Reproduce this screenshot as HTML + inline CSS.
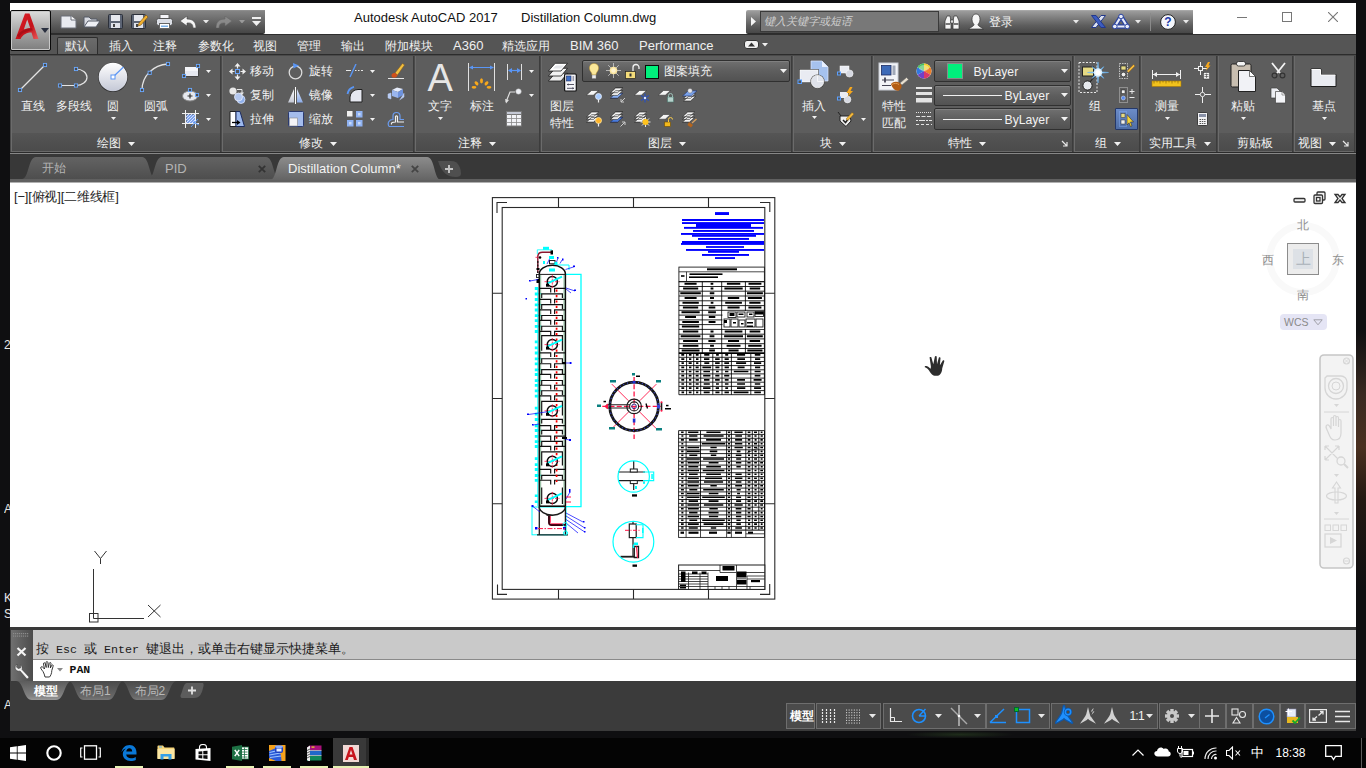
<!DOCTYPE html>
<html lang="zh">
<head>
<meta charset="utf-8">
<title>Autodesk AutoCAD 2017 - Distillation Column.dwg</title>
<style>
*{box-sizing:border-box;margin:0;padding:0}
html,body{width:1366px;height:768px;overflow:hidden;background:#0f0f11}
body{font-family:"Liberation Sans",sans-serif;font-size:12px;color:#f2f2f2;position:relative}
.b{position:absolute;display:block}
.t{position:absolute;white-space:nowrap;line-height:1}
#desk{left:0;top:0;width:1366px;height:768px;background:#0f0f11}
#deskr{left:1356px;top:330px;width:10px;height:260px;background:linear-gradient(#0f0f11,#3a2a22 25%,#4a3020 45%,#241812 65%,#0f0f11)}
#win{left:10px;top:3px;width:1346px;height:728px;background:#3b3b3b}
#title{left:10px;top:3px;width:1346px;height:31px;background:#fff}
.bar{background:linear-gradient(#848484,#6e6e6e 35%,#5a5a5a 65%,#464646);border-top:1px solid #8e8e8e;border-bottom:1px solid #2c2c2c}
.bar2{background:linear-gradient(#9c9c9c,#7a7a7a 35%,#5e5e5e 65%,#474747);border-top:1px solid #a8a8a8;border-bottom:1px solid #2c2c2c}
#menurow{left:10px;top:34px;width:1346px;height:21px;background:#555;border-top:1px solid #2e2e2e}
#ribbon{left:10px;top:54px;width:1346px;height:100px;background:#4a4a4a;border-top:1px solid #2c2c2c;border-bottom:1px solid #878787;box-shadow:inset 0 -1px 0 #2b2b2b}
.pan{position:absolute;top:56px;height:96px;background:#5d5d5d;border-left:1px solid #6b6b6b;border-right:1px solid #3c3c3c}
.pan i{position:absolute;left:0;right:0;bottom:0;height:19px;background:linear-gradient(#555,#4b4b4b);border-bottom:1px solid #686868}
.combo{position:absolute;background:linear-gradient(#707070,#5e5e5e 50%,#525252);border:1px solid #303030;border-radius:2px;box-shadow:inset 0 1px 0 #808080}
#ftabs{left:10px;top:154px;width:1346px;height:28px;background:#383838}
#ftline{left:10px;top:179px;width:1346px;height:4px;background:#606060;border-bottom:1px solid #b0b0b0}
#draw{left:10px;top:183px;width:1346px;height:445px;background:#fff}
#cmd{left:10px;top:627px;width:1346px;height:55px;background:#3a3a3a}
#cmdl{left:11px;top:630px;width:22px;height:51px;background:linear-gradient(90deg,#707070,#4c4c4c)}
#cmdhist{left:33px;top:630px;width:1323px;height:29px;background:#c9c9c9}
#cmdin{left:33px;top:659px;width:1323px;height:22px;background:#fff;border-top:1px solid #8a8a8a}
#task{left:0;top:738px;width:1366px;height:30px;background:#040404}
.sg{position:absolute;top:703px;height:26px;border:1px solid #6e6e6e;background:#4b4b4b}
</style>
</head>
<body>
<div id="desk" class="b"></div><div id="deskr" class="b"></div>
<div id="win" class="b"></div>
<div id="title" class="b"></div>
<div class="b bar" style="left:50px;top:10px;width:215px;height:24px;border-radius:0 0 2px 0"></div>
<svg class="b" style="left:60px;top:15px;" width="17" height="14" viewBox="0 0 17 14"><path d="M1 1H11L16 5V13H1Z" fill="#e8eaf0" stroke="#6a6e78"/><path d="M11 1V5H16" fill="#fff" stroke="#6a6e78"/></svg>
<svg class="b" style="left:83px;top:15px;" width="18" height="14" viewBox="0 0 18 14"><path d="M1 12V2H6L8 4H14V6" fill="#d8dbe2" stroke="#555a66"/><path d="M1 12L5 6H17L13 12Z" fill="#eef0f5" stroke="#555a66"/></svg>
<svg class="b" style="left:108px;top:14px;" width="15" height="15" viewBox="0 0 15 15"><rect x=".5" y=".5" width="14" height="14" rx="1" fill="#5c6474" stroke="#2c303a"/><rect x="3" y="1" width="9" height="6" fill="#e6e8ee"/><rect x="3" y="9" width="9" height="5" fill="#dfe2ea"/><rect x="5" y="10" width="2" height="3" fill="#444"/></svg>
<svg class="b" style="left:131px;top:14px;" width="18" height="15" viewBox="0 0 18 15"><rect x=".5" y=".5" width="14" height="14" rx="1" fill="#5c6474" stroke="#2c303a"/><rect x="3" y="1" width="9" height="6" fill="#e6e8ee"/><rect x="3" y="9" width="9" height="5" fill="#dfe2ea"/><rect x="5" y="10" width="2" height="3" fill="#444"/><path d="M8 9L15 1L17 3L10 11L7 12Z" fill="#f0b030" stroke="#7a5210" stroke-width=".6"/></svg>
<svg class="b" style="left:156px;top:14px;" width="17" height="15" viewBox="0 0 17 15"><rect x="4" y=".5" width="9" height="5" fill="#f4f4f8" stroke="#666"/><rect x=".5" y="4.5" width="16" height="7" rx="2" fill="#dcdfe6" stroke="#555"/><rect x="3.5" y="9.5" width="10" height="5" fill="#fff" stroke="#666"/><rect x="5" y="11.5" width="7" height="1.5" fill="#7ab0e8"/></svg>
<svg class="b" style="left:180px;top:16px;" width="16" height="12" viewBox="0 0 16 12"><path d="M7 0L0 5L7 10V7C11 6.5 13 8 13 12H16C16 6 13 3 7 3Z" fill="#f4f4f4" stroke="#444" stroke-width=".6"/></svg>
<svg class="b" style="left:202.5px;top:19.75px;" width="6" height="3.5" viewBox="0 0 6 3.5"><path d="M0 0H6L3.0 3.5Z" fill="#e8e8e8"/></svg>
<svg class="b" style="left:216px;top:16px;" width="16" height="12" viewBox="0 0 16 12"><path d="M9 0L16 5L9 10V7C5 6.5 3 8 3 12H0C0 6 3 3 9 3Z" fill="#8a8a8a" stroke="#666" stroke-width=".6"/></svg>
<svg class="b" style="left:238.5px;top:19.75px;" width="6" height="3.5" viewBox="0 0 6 3.5"><path d="M0 0H6L3.0 3.5Z" fill="#9a9a9a"/></svg>
<svg class="b" style="left:252px;top:17px;" width="9" height="9" viewBox="0 0 9 9"><rect x="0" y="0" width="9" height="2" fill="#f0f0f0"/><path d="M0 4H9L4.5 9Z" fill="#f0f0f0"/></svg>
<div class="t" style="left:354px;top:11px;font-size:13px;color:#111;">Autodesk AutoCAD 2017</div>
<div class="t" style="left:521px;top:11px;font-size:13px;color:#111;">Distillation Column.dwg</div>
<div class="b bar2" style="left:746px;top:10px;width:447px;height:24px;border-radius:2px 0 0 2px"></div>
<svg class="b" style="left:751px;top:17px;" width="5" height="9" viewBox="0 0 5 9"><path d="M0 0L5 4.5L0 9Z" fill="#f4f4f4"/></svg>
<div class="b " style="left:760px;top:11px;width:179px;height:21px;background:#787878;border:1px solid #3a3a3a"></div>
<div class="t" style="left:764px;top:16px;font-size:11px;color:#cfcfcf;width:88.0px;text-align:center;font-style:italic">键入关键字或短语</div>
<svg class="b" style="left:944px;top:14px;" width="16" height="16" viewBox="0 0 16 16"><path d="M1 15V7L3 2H6L7 7V15Z M9 15V7L10 2H13L15 7V15Z" fill="#f4f4f4" stroke="#333" stroke-width=".7"/><rect x="6.5" y="6" width="3" height="3" fill="#ddd" stroke="#333" stroke-width=".6"/><rect x="1.5" y="9" width="5" height="2" fill="#777"/><rect x="9.5" y="9" width="5" height="2" fill="#777"/></svg>
<svg class="b" style="left:968px;top:13px;" width="16" height="17" viewBox="0 0 16 17"><path d="M8 1C11 1 12 3.5 12 6.5C12 9 10.5 11 10 11.5C10 13 12 13.5 15.5 16H.5C4 13.5 6 13 6 11.5C5.5 11 4 9 4 6.5C4 3.5 5 1 8 1Z" fill="#f6f6f6" stroke="#333" stroke-width=".7"/></svg>
<div class="t" style="left:989px;top:15.5px;font-size:12px;color:#f4f4f4;width:24.0px;text-align:center;">登录</div>
<svg class="b" style="left:1073.0px;top:20.25px;" width="6" height="3.5" viewBox="0 0 6 3.5"><path d="M0 0H6L3.0 3.5Z" fill="#e8e8e8"/></svg>
<svg class="b" style="left:1091px;top:14.5px;" width="15" height="13" viewBox="0 0 15 13"><path d="M10 .5H14.500L5 12.500H.500Z" fill="#dde2f0" stroke="#22388c" stroke-width="1"/><path d="M.5 .5H5L14.500 12.500H10Z" fill="#3c5cc0" stroke="#22388c" stroke-width="1"/></svg>
<svg class="b" style="left:1112px;top:13px;" width="18" height="17" viewBox="0 0 18 17"><path d="M9 3.500L2.800 13.500H15.200Z" fill="none" stroke="#2c44a0" stroke-width="4.600" stroke-linejoin="round"/><path d="M9 3.500L2.800 13.500H15.200Z" fill="none" stroke="#e8ecf8" stroke-width="2.200" stroke-linejoin="round"/><circle cx="9" cy="3.500" r="2.300" fill="#e8ecf8" stroke="#2c44a0" stroke-width="1"/><circle cx="2.800" cy="13.500" r="2.300" fill="#e8ecf8" stroke="#2c44a0" stroke-width="1"/><circle cx="15.200" cy="13.500" r="2.300" fill="#e8ecf8" stroke="#2c44a0" stroke-width="1"/></svg>
<svg class="b" style="left:1134.5px;top:20.25px;" width="6" height="3.5" viewBox="0 0 6 3.5"><path d="M0 0H6L3.0 3.5Z" fill="#e8e8e8"/></svg>
<div class="b " style="left:1150px;top:13px;width:1px;height:18px;background:#8a8a8a"></div>
<svg class="b" style="left:1160px;top:14px;" width="16" height="16" viewBox="0 0 16 16"><circle cx="8" cy="8" r="7.4" fill="#f4f6fb" stroke="#222" stroke-width="1"/><text x="8" y="12.3" text-anchor="middle" font-family="Liberation Sans" font-weight="bold" font-size="12" fill="#1c3aa8">?</text></svg>
<svg class="b" style="left:1182.5px;top:20.25px;" width="6" height="3.5" viewBox="0 0 6 3.5"><path d="M0 0H6L3.0 3.5Z" fill="#e8e8e8"/></svg>
<div class="b " style="left:1237px;top:17px;width:10px;height:1px;background:#777"></div>
<div class="b " style="left:1282px;top:12px;width:10px;height:10px;border:1px solid #777"></div>
<svg class="b" style="left:1328px;top:12px;" width="10" height="10" viewBox="0 0 10 10"><path d="M0 0L10 10M10 0L0 10" stroke="#777" stroke-width="1.1"/></svg>
<div id="menurow" class="b"></div>
<div class="b " style="left:56.5px;top:37px;width:41.5px;height:18px;background:linear-gradient(#6b6b6b,#5e5e5e);border:1px solid #2d2d2d;border-bottom:none;border-radius:2px 2px 0 0"></div>
<div class="t" style="left:65px;top:40px;font-size:12px;color:#f0f0f0;width:24.0px;text-align:center;">默认</div>
<div class="t" style="left:109px;top:40px;font-size:12px;color:#f0f0f0;width:24.0px;text-align:center;">插入</div>
<div class="t" style="left:153px;top:40px;font-size:12px;color:#f0f0f0;width:24.0px;text-align:center;">注释</div>
<div class="t" style="left:197.5px;top:40px;font-size:12px;color:#f0f0f0;width:36.0px;text-align:center;">参数化</div>
<div class="t" style="left:253px;top:40px;font-size:12px;color:#f0f0f0;width:24.0px;text-align:center;">视图</div>
<div class="t" style="left:297px;top:40px;font-size:12px;color:#f0f0f0;width:24.0px;text-align:center;">管理</div>
<div class="t" style="left:341px;top:40px;font-size:12px;color:#f0f0f0;width:24.0px;text-align:center;">输出</div>
<div class="t" style="left:385px;top:40px;font-size:12px;color:#f0f0f0;width:48.0px;text-align:center;">附加模块</div>
<div class="t" style="left:502px;top:40px;font-size:12px;color:#f0f0f0;width:48.0px;text-align:center;">精选应用</div>
<div class="t" style="left:453px;top:39px;font-size:13px;color:#f0f0f0;">A360</div>
<div class="t" style="left:570px;top:39px;font-size:13px;color:#f0f0f0;">BIM 360</div>
<div class="t" style="left:639px;top:39px;font-size:13px;color:#f0f0f0;">Performance</div>
<svg class="b" style="left:744px;top:40px;" width="15" height="9" viewBox="0 0 15 9"><rect x=".5" y=".5" width="14" height="8" rx="2.5" fill="#f0f0f0" stroke="#333"/><path d="M4 6.5H11L7.5 2.5Z" fill="#333"/></svg>
<svg class="b" style="left:762.0px;top:43.25px;" width="6" height="3.5" viewBox="0 0 6 3.5"><path d="M0 0H6L3.0 3.5Z" fill="#f0f0f0"/></svg>
<div class="b " style="left:10px;top:10px;width:41px;height:41px;background:linear-gradient(#dcdcdc,#a4a4a4 55%,#7e7e7e);border:1px solid #0a0a0a;border-radius:2px;box-shadow:inset 0 0 0 1px #c8c8c8"></div>
<svg class="b" style="left:15px;top:13px;" width="24" height="27" viewBox="0 0 24 27"><defs><linearGradient id="ag" x1="0" y1="0" x2="1" y2="1"><stop offset="0" stop-color="#e0222a"/><stop offset=".6" stop-color="#c4121a"/><stop offset="1" stop-color="#e85a5a"/></linearGradient></defs><path d="M10 .5H14.5L23.5 26H18.5L16.5 19.5C12 19.5 8 21 5.5 26H.5Z M12.2 6.5L8.8 16.5C11 15.5 13.5 15.2 15.3 15.2Z" fill="url(#ag)" fill-rule="evenodd"/><path d="M2 22.5C6 17 12 15 17 15.2L17.8 17.5C12 17.5 7 19.5 4 24.5Z" fill="#a00c14" opacity=".75"/></svg>
<svg class="b" style="left:41px;top:28px;" width="8" height="5" viewBox="0 0 8 5"><path d="M0 0H8L4 5Z" fill="#2a3040"/></svg>
<div id="ribbon" class="b"></div>
<div class="pan" style="left:11px;width:210px"><i></i></div>
<div class="pan" style="left:222px;width:192px"><i></i></div>
<div class="pan" style="left:415px;width:125px"><i></i></div>
<div class="pan" style="left:541px;width:251px"><i></i></div>
<div class="pan" style="left:793px;width:79px"><i></i></div>
<div class="pan" style="left:873px;width:200px"><i></i></div>
<div class="pan" style="left:1074px;width:66px"><i></i></div>
<div class="pan" style="left:1141px;width:76px"><i></i></div>
<div class="pan" style="left:1218px;width:75px"><i></i></div>
<div class="pan" style="left:1294px;width:61px"><i></i></div>
<svg class="b" style="left:16px;top:60px;" width="34" height="34" viewBox="0 0 34 34"><path d="M4 30L29 5" stroke="#e4e4e4" stroke-width="1.3"/><rect x="2.4" y="28.4" width="3.2" height="3.2" fill="#4a4a4a" stroke="#6aa8ff" stroke-width=".9"/><rect x="27.4" y="3.4" width="3.2" height="3.2" fill="#4a4a4a" stroke="#6aa8ff" stroke-width=".9"/></svg>
<div class="t" style="left:21px;top:99.5px;font-size:12px;color:#f2f2f2;width:24.0px;text-align:center;">直线</div>
<svg class="b" style="left:54px;top:62px;" width="38" height="30" viewBox="0 0 38 30"><path d="M6 23.5H22A11 8.25 0 0 0 22 7" fill="none" stroke="#e4e4e4" stroke-width="1.2"/><rect x="4.4" y="21.9" width="3.2" height="3.2" fill="#4a4a4a" stroke="#6aa8ff" stroke-width=".9"/><rect x="20.4" y="21.9" width="3.2" height="3.2" fill="#4a4a4a" stroke="#6aa8ff" stroke-width=".9"/><rect x="20.4" y="5.4" width="3.2" height="3.2" fill="#4a4a4a" stroke="#6aa8ff" stroke-width=".9"/></svg>
<div class="t" style="left:55.5px;top:99.5px;font-size:12px;color:#f2f2f2;width:36.0px;text-align:center;">多段线</div>
<svg class="b" style="left:97px;top:61px;" width="32" height="32" viewBox="0 0 32 32"><defs><linearGradient id="cg" x1="0" y1="0" x2="0" y2="1"><stop offset="0" stop-color="#fff"/><stop offset="1" stop-color="#c4c8d6"/></linearGradient></defs><circle cx="16" cy="16.3" r="14.8" fill="#2c2c2c"/><circle cx="16" cy="16" r="14.3" fill="url(#cg)"/><path d="M16 16L26.5 6" stroke="#5a96f5" stroke-width="1.2"/><rect x="14" y="14" width="4" height="4" fill="#fff" stroke="#5a96f5"/></svg>
<div class="t" style="left:107px;top:99.5px;font-size:12px;color:#f2f2f2;width:12.0px;text-align:center;">圆</div>
<svg class="b" style="left:110.8px;top:116.8px;" width="5" height="3" viewBox="0 0 5 3"><path d="M0 0H5L2.5 3Z" fill="#f2f2f2"/></svg>
<svg class="b" style="left:137px;top:58px;" width="36" height="36" viewBox="0 0 36 36"><path d="M5 32C5 18 16 7 31 6" fill="none" stroke="#e4e4e4" stroke-width="1.3"/><rect x="3.4" y="30.4" width="3.2" height="3.2" fill="#4a4a4a" stroke="#6aa8ff" stroke-width=".9"/><rect x="11.1" y="13.200000000000001" width="3.2" height="3.2" fill="#4a4a4a" stroke="#6aa8ff" stroke-width=".9"/><rect x="29.4" y="4.4" width="3.2" height="3.2" fill="#4a4a4a" stroke="#6aa8ff" stroke-width=".9"/></svg>
<div class="t" style="left:143.5px;top:99.5px;font-size:12px;color:#f2f2f2;width:24.0px;text-align:center;">圆弧</div>
<svg class="b" style="left:152.8px;top:116.8px;" width="5" height="3" viewBox="0 0 5 3"><path d="M0 0H5L2.5 3Z" fill="#f2f2f2"/></svg>
<svg class="b" style="left:181px;top:63px;" width="20" height="16" viewBox="0 0 20 16"><rect x="4.5" y="4.5" width="13" height="9" fill="#2c2c2c"/><rect x="4" y="4" width="13" height="9" fill="#e6e8f0"/><rect x="4" y="4" width="13" height="4" fill="#f4f5f9"/><rect x="1.4" y="11.4" width="3.2" height="3.2" fill="#4a4a4a" stroke="#6aa8ff" stroke-width=".9"/><rect x="15.4" y="1.4" width="3.2" height="3.2" fill="#4a4a4a" stroke="#6aa8ff" stroke-width=".9"/></svg>
<svg class="b" style="left:205.8px;top:70.0px;" width="5" height="3" viewBox="0 0 5 3"><path d="M0 0H5L2.5 3Z" fill="#f2f2f2"/></svg>
<svg class="b" style="left:182px;top:87px;" width="18" height="16" viewBox="0 0 18 16"><ellipse cx="8" cy="9" rx="7.5" ry="5" fill="#e6e8ee" stroke="#888"/><path d="M8 6.5V11.5M5.5 9H10.5" stroke="#333" stroke-width="1.2"/><rect x="6.4" y="1.4" width="3.2" height="3.2" fill="#4a4a4a" stroke="#6aa8ff" stroke-width=".9"/><rect x="13.4" y="6.4" width="3.2" height="3.2" fill="#4a4a4a" stroke="#6aa8ff" stroke-width=".9"/></svg>
<svg class="b" style="left:205.8px;top:94.0px;" width="5" height="3" viewBox="0 0 5 3"><path d="M0 0H5L2.5 3Z" fill="#f2f2f2"/></svg>
<svg class="b" style="left:182px;top:110px;" width="18" height="18" viewBox="0 0 18 18"><path d="M3.5 0V18M13.5 0V18M0 3.5H17M0 13.5H17" stroke="#f0f0f0" stroke-width="1"/><rect x="4.5" y="4.5" width="8.5" height="8.5" fill="#7ea4ee"/><path d="M4 7L7 4M4 10L10 4M4 13L13 4M7 13L13 7M10 13L13 10" stroke="#dfe8ff" stroke-width=".9"/><path d="M9 17L16 9M11 12L17 15" stroke="#5a96f5" stroke-width="1"/></svg>
<svg class="b" style="left:205.8px;top:118.0px;" width="5" height="3" viewBox="0 0 5 3"><path d="M0 0H5L2.5 3Z" fill="#f2f2f2"/></svg>
<div class="t" style="left:96.5px;top:137px;font-size:12px;color:#f2f2f2;width:24.0px;text-align:center;">绘图</div>
<svg class="b" style="left:127.5px;top:141.5px;" width="7" height="4" viewBox="0 0 7 4"><path d="M0 0H7L3.5 4Z" fill="#f2f2f2"/></svg>
<svg class="b" style="left:229px;top:63px;" width="17" height="17" viewBox="0 0 17 17"><path d="M8.5 0L11.5 3.5H5.5ZM8.5 17L11.5 13.5H5.5ZM0 8.5L3.5 5.5V11.5ZM17 8.5L13.5 5.5V11.5Z" fill="#f0f0f0"/><path d="M8.5 3V5.5M8.5 11.5V14M3 8.5H5.5M11.5 8.5H14" stroke="#f0f0f0" stroke-width="1.2"/><rect x="6.5" y="6.5" width="4" height="4" fill="#555" stroke="#6aa6ff"/></svg>
<div class="t" style="left:250px;top:65px;font-size:12px;color:#f2f2f2;width:24.0px;text-align:center;">移动</div>
<svg class="b" style="left:229px;top:87px;" width="17" height="17" viewBox="0 0 17 17"><circle cx="4" cy="4" r="3.6" fill="#e8e8e8"/><circle cx="12" cy="12.5" r="4" fill="#8eb0ec" stroke="#dde6fa" stroke-width=".8"/><circle cx="9.5" cy="10" r="4" fill="#b4c8f0" stroke="#e8eefc" stroke-width=".8"/><path d="M8 2.5H13V6" fill="none" stroke="#e8e8e8" stroke-width="1"/><path d="M11 5.5H15L13 8Z" fill="#e8e8e8"/></svg>
<div class="t" style="left:250px;top:89px;font-size:12px;color:#f2f2f2;width:24.0px;text-align:center;">复制</div>
<svg class="b" style="left:229px;top:111px;" width="17" height="17" viewBox="0 0 17 17"><path d="M1 .5H7V15.5H1Z" fill="#fff" stroke="#222"/><path d="M7 .5H11L15.5 15.5H7Z" fill="#9db9ee" stroke="#1c2c60"/><path d="M3 11.5H9" stroke="#000" stroke-width="1.3"/><path d="M8 9L11.5 11.5L8 14Z" fill="#000"/></svg>
<div class="t" style="left:250px;top:113px;font-size:12px;color:#f2f2f2;width:24.0px;text-align:center;">拉伸</div>
<svg class="b" style="left:288px;top:63px;" width="16" height="17" viewBox="0 0 16 17"><circle cx="7.5" cy="9.5" r="6.3" fill="none" stroke="#dcdcdc" stroke-width="1.3"/><path d="M5 0L11 2.5L5.5 5.5Z" fill="#5a96f5"/></svg>
<div class="t" style="left:309px;top:65px;font-size:12px;color:#f2f2f2;width:24.0px;text-align:center;">旋转</div>
<svg class="b" style="left:288px;top:87px;" width="16" height="17" viewBox="0 0 16 17"><defs><linearGradient id="mg1" x1="0" y1="0" x2="0" y2="1"><stop offset="0" stop-color="#fff"/><stop offset="1" stop-color="#c4c8d4"/></linearGradient><linearGradient id="mg2" x1="0" y1="0" x2="0" y2="1"><stop offset="0" stop-color="#e4ecfc"/><stop offset="1" stop-color="#8cace8"/></linearGradient></defs><path d="M6 2V15.5H0Z" fill="url(#mg1)"/><path d="M9 2V15.5H15Z" fill="url(#mg2)"/><path d="M7.5 0V17" stroke="#fff" stroke-width="1"/></svg>
<div class="t" style="left:309px;top:89px;font-size:12px;color:#f2f2f2;width:24.0px;text-align:center;">镜像</div>
<svg class="b" style="left:288px;top:111px;" width="16" height="16" viewBox="0 0 16 16"><rect x=".5" y=".5" width="15" height="15" rx="1" fill="#a4bcec" stroke="#2a3a70"/><rect x="1.5" y="7" width="8" height="8" fill="#f4f4f8" stroke="#888" stroke-width=".6"/></svg>
<div class="t" style="left:309px;top:113px;font-size:12px;color:#f2f2f2;width:24.0px;text-align:center;">缩放</div>
<svg class="b" style="left:346px;top:64px;" width="18" height="15" viewBox="0 0 18 15"><path d="M0 6.5H5M9 6.5H10.5M12 6.5H13.5M15 6.5H17" stroke="#e8e8e8" stroke-width="1"/><path d="M4 13L10 0" stroke="#5a96f5" stroke-width="1.4"/></svg>
<svg class="b" style="left:369.5px;top:70.0px;" width="5" height="3" viewBox="0 0 5 3"><path d="M0 0H5L2.5 3Z" fill="#f2f2f2"/></svg>
<svg class="b" style="left:346px;top:86px;" width="17" height="17" viewBox="0 0 17 17"><path d="M4 16V11A8 8 0 0 1 12 3.5H16V16Z" fill="#e6e8f0" stroke="#222" stroke-width="1"/><path d="M1.5 8A9 9 0 0 1 8 .8" fill="none" stroke="#5a96f5" stroke-width="1.8"/></svg>
<svg class="b" style="left:369.5px;top:94.0px;" width="5" height="3" viewBox="0 0 5 3"><path d="M0 0H5L2.5 3Z" fill="#f2f2f2"/></svg>
<svg class="b" style="left:347px;top:111px;" width="16" height="16" viewBox="0 0 16 16"><rect x="0" y="0" width="5.5" height="5.5" fill="#f0f0f0"/><rect x="9" y="0" width="6.5" height="6.5" fill="#8fb2f2"/><rect x="11" y="2" width="2.5" height="2.5" fill="#c8daf8"/><rect x="0" y="9" width="6.5" height="6.5" fill="#8fb2f2"/><rect x="2" y="11" width="2.5" height="2.5" fill="#c8daf8"/><rect x="9" y="9" width="6.5" height="6.5" fill="#8fb2f2"/><rect x="11" y="11" width="2.5" height="2.5" fill="#c8daf8"/></svg>
<svg class="b" style="left:369.5px;top:118.0px;" width="5" height="3" viewBox="0 0 5 3"><path d="M0 0H5L2.5 3Z" fill="#f2f2f2"/></svg>
<svg class="b" style="left:387px;top:62px;" width="18" height="18" viewBox="0 0 18 18"><path d="M1 16.5H17" stroke="#e8e8e8" stroke-width="1"/><path d="M8 11L15.5 1.5L17.5 3L10.5 13Z" fill="#f2c040" stroke="#8a5a10" stroke-width=".5"/><path d="M5 15C3.5 13 5.5 10.5 8 11L10.5 13C10 15.5 7 16.5 5 15Z" fill="#d0501c"/></svg>
<svg class="b" style="left:387px;top:86px;" width="18" height="17" viewBox="0 0 18 17"><path d="M5 4L10 1.5L16 3L11 6Z" fill="#e6ecfa"/><path d="M5 4V10L11 12V6Z" fill="#9ab6ee"/><path d="M11 6L16 3V9L11 12Z" fill="#6e92dc"/><path d="M1 8L4 7V13L1 12ZM12.5 14L17 11V7" fill="#b8ccf4" stroke="#b8ccf4" stroke-width=".5"/></svg>
<svg class="b" style="left:387px;top:111px;" width="18" height="17" viewBox="0 0 18 17"><path d="M2 15.5C0 12 2 8.5 6 8.5V5A3.5 3.5 0 0 1 13 5V8.5H17M2 15.5H17" fill="none" stroke="#6a9cf0" stroke-width="1.2"/><path d="M4.5 13.5C4 11.5 5.5 11 8.5 11V5.5A1.2 1.2 0 0 1 10.5 5.5V11H17" fill="none" stroke="#f0f0f0" stroke-width="1.2"/></svg>
<div class="t" style="left:299px;top:137px;font-size:12px;color:#f2f2f2;width:24.0px;text-align:center;">修改</div>
<svg class="b" style="left:330.0px;top:141.5px;" width="7" height="4" viewBox="0 0 7 4"><path d="M0 0H7L3.5 4Z" fill="#f2f2f2"/></svg>
<div class="t" style="left:427.5px;top:58.5px;font-size:38px;color:#e6e6e6;">A</div>
<div class="t" style="left:428px;top:99.5px;font-size:12px;color:#f2f2f2;width:24.0px;text-align:center;">文字</div>
<svg class="b" style="left:437.8px;top:116.8px;" width="5" height="3" viewBox="0 0 5 3"><path d="M0 0H5L2.5 3Z" fill="#f2f2f2"/></svg>
<svg class="b" style="left:466px;top:62px;" width="31" height="30" viewBox="0 0 31 30"><path d="M2.5 1V29M28.5 1V29" stroke="#e0e0e0" stroke-width="1"/><path d="M4 5.5H27" stroke="#5a96f5" stroke-width="1"/><path d="M3 5.5L7 3.5V7.5ZM28 5.5L24 3.5V7.5Z" fill="#5a96f5"/><g fill="#f7a81c" transform="translate(0 1.800)"><ellipse cx="15.5" cy="17" rx="1.5" ry="2.6"/><ellipse cx="10.5" cy="19.5" rx="1.5" ry="2.4" transform="rotate(-40 10.5 19.5)"/><ellipse cx="20.5" cy="19.5" rx="1.5" ry="2.4" transform="rotate(40 20.5 19.5)"/><ellipse cx="8" cy="23.5" rx="2.4" ry="1.4"/><ellipse cx="23" cy="23.5" rx="2.4" ry="1.4"/></g></svg>
<div class="t" style="left:470px;top:99.5px;font-size:12px;color:#f2f2f2;width:24.0px;text-align:center;">标注</div>
<svg class="b" style="left:505.5px;top:64px;" width="18" height="16" viewBox="0 0 18 16"><path d="M1.5 0V16M15.5 0V16" stroke="#e0e0e0" stroke-width="1"/><path d="M3 6.5H14" stroke="#5a96f5" stroke-width="1.2"/><path d="M2 6.5L6 4V9ZM15 6.5L11 4V9Z" fill="#5a96f5"/></svg>
<svg class="b" style="left:528.5px;top:70.0px;" width="5" height="3" viewBox="0 0 5 3"><path d="M0 0H5L2.5 3Z" fill="#f2f2f2"/></svg>
<svg class="b" style="left:505px;top:87px;" width="18" height="17" viewBox="0 0 18 17"><path d="M1 15L5 5H10" fill="none" stroke="#e0e0e0" stroke-width="1.2"/><path d="M0 12L1 16.5L4 13Z" fill="#e0e0e0"/><circle cx="13.5" cy="4.5" r="2.8" fill="#eef0f5" stroke="#999" stroke-width=".5"/></svg>
<svg class="b" style="left:528.5px;top:94.0px;" width="5" height="3" viewBox="0 0 5 3"><path d="M0 0H5L2.5 3Z" fill="#f2f2f2"/></svg>
<svg class="b" style="left:506px;top:111px;" width="16" height="16" viewBox="0 0 16 16"><rect x=".5" y=".5" width="15" height="14.5" fill="#f2f3f7" stroke="#777"/><rect x=".5" y=".5" width="15" height="3" fill="#c4c8d4" stroke="#777"/><path d="M.5 7.5H15.5M.5 11.5H15.5M5.5 3.5V15M10.5 3.5V15" stroke="#888" stroke-width=".8"/></svg>
<div class="t" style="left:458px;top:137px;font-size:12px;color:#f2f2f2;width:24.0px;text-align:center;">注释</div>
<svg class="b" style="left:489.0px;top:141.5px;" width="7" height="4" viewBox="0 0 7 4"><path d="M0 0H7L3.5 4Z" fill="#f2f2f2"/></svg>
<svg class="b" style="left:547px;top:61px;" width="31" height="32" viewBox="0 0 31 32"><path d="M1.4 20L8.2 12.3H20.5L14 20Z" fill="#ececec" stroke="#1c1c1c" stroke-width=".8"/><path d="M1.4 15L8.2 7.3H20.5L14 15Z" fill="#f2f2f2" stroke="#1c1c1c" stroke-width=".8"/><path d="M1.4 10L8.2 2.3H20.5L14 10Z" fill="#fff" stroke="#1c1c1c" stroke-width=".8"/><path d="M6 7.5L9 4.5H17L14 7.5Z" fill="#e4e6ea"/><rect x="17.6" y="13" width="11.7" height="17" rx="1" fill="#f4f5f9" stroke="#111" stroke-width="1.2"/><rect x="19.5" y="15" width="4.5" height="5" fill="#3c6ec8" stroke="#1c2c60" stroke-width=".6"/><rect x="25.5" y="15" width="1.6" height="5" fill="#99a"/><path d="M20 23.5H27M20 27.3H27" stroke="#445" stroke-width=".9"/><path d="M20 23.5l1.5 -1.2v2.4zM27 27.3l-1.5 -1.2v2.4z" fill="#445"/></svg>
<div class="t" style="left:550px;top:99.5px;font-size:12px;color:#f2f2f2;width:24.0px;text-align:center;">图层</div>
<div class="t" style="left:550px;top:116.5px;font-size:12px;color:#f2f2f2;width:24.0px;text-align:center;">特性</div>
<div class="combo" style="left:582px;top:60px;width:208px;height:22px"></div>
<svg class="b" style="left:588px;top:63px;" width="12" height="17" viewBox="0 0 12 17"><path d="M6 .5C9.5 .5 11 3.5 10.5 6C10 8.5 8 9.5 8 12H4C4 9.5 2 8.5 1.5 6C1 3.5 2.5 .5 6 .5Z" fill="#fbe89a" stroke="#b8902c" stroke-width=".5"/><rect x="4" y="12" width="4" height="3.5" fill="#ececec" stroke="#777" stroke-width=".4"/></svg>
<svg class="b" style="left:605px;top:62px;" width="17" height="17" viewBox="0 0 17 17"><g stroke="#dcdcdc" stroke-width=".7"><path d="M8.5 1V16M1 8.5H16M3.2 3.2L13.8 13.8M13.8 3.2L3.2 13.8"/></g><circle cx="8.5" cy="8.5" r="3.8" fill="#fbe6a0"/><circle cx="8.5" cy="8.5" r="2.2" fill="#fff4d0"/></svg>
<svg class="b" style="left:625px;top:63px;" width="15" height="16" viewBox="0 0 15 16"><path d="M8 8V4.5A3 3 0 0 1 14 4.5V6" fill="none" stroke="#f2f2f2" stroke-width="1.3"/><rect x=".5" y="8.5" width="10" height="7" fill="#f4dc7a" stroke="#222" stroke-width=".7"/><rect x="4.5" y="10.5" width="2" height="3" fill="#333"/></svg>
<div class="b " style="left:645px;top:65px;width:14px;height:14px;background:#00f07c;border:1px solid #0a0a0a"></div>
<div class="t" style="left:664px;top:65px;font-size:12px;color:#f2f2f2;width:48.0px;text-align:center;">图案填充</div>
<svg class="b" style="left:780.0px;top:69.0px;" width="7" height="4" viewBox="0 0 7 4"><path d="M0 0H7L3.5 4Z" fill="#f2f2f2"/></svg>
<svg class="b" style="left:586px;top:87px;" width="17" height="17" viewBox="0 0 17 17"><path d="M.3 8.2L5.5 3.5H12.5L7.3 8.2Z" fill="#f4f4f4" stroke="#222" stroke-width=".5"/><circle cx="12.5" cy="9.5" r="3" fill="#a8ccff" stroke="#e8f0ff" stroke-width=".8"/><path d="M12.5 12.5V15.5" stroke="#eee" stroke-width="1.2"/></svg>
<svg class="b" style="left:586px;top:111px;" width="17" height="17" viewBox="0 0 17 17"><path d="M.5 11.1L5.7 6.4H12.7L7.5 11.1Z M.5 8.4L5.7 3.7H12.7L7.5 8.4Z M.5 5.7L5.7 1H12.7L7.5 5.7Z" fill="#f4f4f4" stroke="#222" stroke-width=".6"/><circle cx="12.5" cy="9.5" r="3" fill="#ffb428" stroke="#ffe6a0" stroke-width=".8"/><path d="M12.5 12.5V15.5" stroke="#eee" stroke-width="1.2"/></svg>
<svg class="b" style="left:610px;top:87px;" width="17" height="17" viewBox="0 0 17 17"><path d="M.5 11.1L5.7 6.4H12.7L7.5 11.1Z M.5 8.4L5.7 3.7H12.7L7.5 8.4Z M.5 5.7L5.7 1H12.7L7.5 5.7Z" fill="#f4f4f4" stroke="#222" stroke-width=".6"/><path d="M.5 11.1L5.7 6.4H12.7L7.5 11.1Z" fill="#8ab0f0" stroke="#1c2c60" stroke-width=".6"/><path d="M.5 8.4L5.7 3.7H12.7L7.5 8.4Z M.5 5.7L5.7 1H12.7L7.5 5.7Z" fill="#f4f4f4" stroke="#222" stroke-width=".6"/><path d="M15 11L11 15M11 12V15H14" fill="none" stroke="#ccc" stroke-width="1"/></svg>
<svg class="b" style="left:610px;top:111px;" width="17" height="17" viewBox="0 0 17 17"><path d="M.5 11.1L5.7 6.4H12.7L7.5 11.1Z M.5 8.4L5.7 3.7H12.7L7.5 8.4Z M.5 5.7L5.7 1H12.7L7.5 5.7Z" fill="#f4f4f4" stroke="#222" stroke-width=".6"/><path d="M.5 11.1L5.7 6.4H12.7L7.5 11.1Z" fill="#4a7cdc" stroke="#1c2c60" stroke-width=".6"/><path d="M.5 8.4L5.7 3.7H12.7L7.5 8.4Z M.5 5.7L5.7 1H12.7L7.5 5.7Z" fill="#f4f4f4" stroke="#222" stroke-width=".6"/><path d="M10.5 15.5L15 11M12 11H15V14" fill="none" stroke="#ccc" stroke-width="1"/></svg>
<svg class="b" style="left:634px;top:87px;" width="17" height="17" viewBox="0 0 17 17"><path d="M.3 8.2L5.5 3.5H12.5L7.3 8.2Z" fill="#f4f4f4" stroke="#222" stroke-width=".5"/><g stroke="#2c50b8" stroke-width="1.3"><path d="M11 6.5V15.5M7 8.5L15 13.5M15 8.5L7 13.5"/></g><circle cx="11" cy="11" r="1.2" fill="#dfe8ff"/></svg>
<svg class="b" style="left:634px;top:111px;" width="17" height="17" viewBox="0 0 17 17"><path d="M.5 11.1L5.7 6.4H12.7L7.5 11.1Z M.5 8.4L5.7 3.7H12.7L7.5 8.4Z M.5 5.7L5.7 1H12.7L7.5 5.7Z" fill="#f4f4f4" stroke="#222" stroke-width=".6"/><g stroke="#f4f4f4" stroke-width=".9"><path d="M11.5 6V16M6.5 11H16.5M8 7.5L15 14.5M15 7.5L8 14.5"/></g><circle cx="11.5" cy="11" r="3" fill="#ffc21c"/></svg>
<svg class="b" style="left:658px;top:87px;" width="17" height="17" viewBox="0 0 17 17"><path d="M.3 8.2L5.5 3.5H12.5L7.3 8.2Z" fill="#f4f4f4" stroke="#222" stroke-width=".5"/><rect x="9.5" y="10" width="6" height="5" fill="#b6d2cc" stroke="#4a7a70" stroke-width=".6"/><path d="M10.5 10V8.5A2 2 0 0 1 14.5 8.5V10" fill="none" stroke="#9cc0b8" stroke-width="1"/></svg>
<svg class="b" style="left:658px;top:111px;" width="17" height="17" viewBox="0 0 17 17"><path d="M.3 8.2L5.5 3.5H12.5L7.3 8.2Z" fill="#f4f4f4" stroke="#222" stroke-width=".5"/><rect x="6.5" y="11" width="6" height="4.5" fill="#f2b81c" stroke="#6a4a08" stroke-width=".6"/><path d="M10.5 11V8.5A2 2 0 0 1 14.5 8.5" fill="none" stroke="#f2c84a" stroke-width="1"/></svg>
<svg class="b" style="left:682px;top:87px;" width="17" height="17" viewBox="0 0 17 17"><path d="M1.5 14L6.7 9.3H13.7L8.5 14Z M1.5 11.3L6.7 6.6H13.7L8.5 11.3Z" fill="#f4f4f4" stroke="#222" stroke-width=".6"/><path d="M.5 9L6.2 3.8H15L9.3 9Z" fill="#7aa2ea" stroke="#1c2c60" stroke-width=".6"/><circle cx="8" cy="3.8" r="2.3" fill="#e8e8ee" stroke="#666" stroke-width=".4"/></svg>
<svg class="b" style="left:682px;top:111px;" width="17" height="17" viewBox="0 0 17 17"><path d="M.5 11.1L5.7 6.4H12.7L7.5 11.1Z M.5 8.4L5.7 3.7H12.7L7.5 8.4Z M.5 5.7L5.7 1H12.7L7.5 5.7Z" fill="#f4f4f4" stroke="#222" stroke-width=".6"/><path d="M7 11L11 14L9 16.5L5.5 14Z" fill="#b4641c"/><path d="M10 12L14.5 8" stroke="#d8a060" stroke-width="1.3"/></svg>
<div class="t" style="left:648px;top:137px;font-size:12px;color:#f2f2f2;width:24.0px;text-align:center;">图层</div>
<svg class="b" style="left:678.5px;top:141.5px;" width="7" height="4" viewBox="0 0 7 4"><path d="M0 0H7L3.5 4Z" fill="#f2f2f2"/></svg>
<svg class="b" style="left:797px;top:60px;" width="33" height="30" viewBox="0 0 33 30"><path d="M14 1H25L31 7V21H14Z" fill="#a6c2ee" stroke="#e0eaff" stroke-width=".7"/><path d="M25 1V7H31Z" fill="#e8f0ff"/><rect x="3" y="10" width="18" height="12" fill="#e9ebf2" stroke="#2a2a2a" stroke-width="1.6"/><rect x="3" y="10" width="18" height="12" fill="#e9ebf2" stroke="#fff" stroke-width=".7"/><circle cx="20.5" cy="21.5" r="6.3" fill="#dfe2ea" stroke="#2a2a2a" stroke-width="1.6"/><circle cx="20.5" cy="21.5" r="6.3" fill="#dfe2ea" stroke="#fff" stroke-width=".7"/><path d="M20.5 21.5V15.5M20.5 21.5H26.5" stroke="#fff" stroke-width=".7"/><rect x="1" y="20" width="3.5" height="3.5" fill="#555" stroke="#5aa0ff"/></svg>
<div class="t" style="left:802px;top:99.5px;font-size:12px;color:#f2f2f2;width:24.0px;text-align:center;">插入</div>
<svg class="b" style="left:812.2px;top:116.0px;" width="5" height="3" viewBox="0 0 5 3"><path d="M0 0H5L2.5 3Z" fill="#f2f2f2"/></svg>
<svg class="b" style="left:837px;top:64px;" width="18" height="15" viewBox="0 0 18 15"><rect x="3" y="2" width="9" height="7" fill="#e9ebf2" stroke="#fff" stroke-width=".5"/><circle cx="12.5" cy="9.5" r="3.6" fill="#d6d9e2" stroke="#fff" stroke-width=".5"/><rect x=".5" y="8" width="3" height="3" fill="#555" stroke="#5aa0ff"/></svg>
<svg class="b" style="left:837px;top:86px;" width="18" height="18" viewBox="0 0 18 18"><rect x="3" y="6" width="8" height="6" fill="#e9ebf2"/><circle cx="10.5" cy="13.5" r="3.4" fill="#d6d9e2" stroke="#fff" stroke-width=".5"/><rect x=".5" y="11" width="3" height="3" fill="#555" stroke="#5aa0ff"/><path d="M13 1L9.5 7H12L10.5 11L16 5H13.5L15.5 1Z" fill="#f7a81c"/></svg>
<svg class="b" style="left:837px;top:111px;" width="18" height="17" viewBox="0 0 18 17"><path d="M1 1L4 5" stroke="#222" stroke-width="1"/><path d="M3 5H13L14 10L9 15.5L3 10Z" fill="#f0f0f0" stroke="#222" stroke-width="1"/><path d="M6 9L8.5 11.5L12 7" fill="none" stroke="#222" stroke-width="1.5"/><path d="M9 8L15 1.5L17 3L11 9.5Z" fill="#f2b83c" stroke="#7a5210" stroke-width=".4"/></svg>
<svg class="b" style="left:860.8px;top:118.0px;" width="5" height="3" viewBox="0 0 5 3"><path d="M0 0H5L2.5 3Z" fill="#f2f2f2"/></svg>
<div class="t" style="left:820px;top:137px;font-size:12px;color:#f2f2f2;width:12.0px;text-align:center;">块</div>
<svg class="b" style="left:838.5px;top:141.5px;" width="7" height="4" viewBox="0 0 7 4"><path d="M0 0H7L3.5 4Z" fill="#f2f2f2"/></svg>
<svg class="b" style="left:878px;top:62px;" width="32" height="31" viewBox="0 0 32 31"><rect x="1" y="1" width="19" height="27" fill="#f2f4f8" stroke="#c8ccd4" stroke-width="1"/><rect x="3.5" y="3.5" width="9.5" height="9.5" fill="#3c6ab8" stroke="#1c2c60" stroke-width=".8"/><rect x="14.5" y="3.5" width="3" height="9.5" fill="#a0a8b8"/><path d="M4 18H16M4 23.5H13" stroke="#445" stroke-width="1"/><path d="M7 15.5V20.5" stroke="#445" stroke-width="1.8"/><path d="M13 22C15 19.5 19 19 22 21C24.5 23 24 26.5 21 28.5C18 29.5 14.5 27 13 22Z" fill="#b25c14"/><path d="M14 22.5C16 21 19 21 21 22.5" stroke="#e09a50" stroke-width="1" fill="none"/><path d="M22 21L28.5 15.5L30.5 17.5L24 23Z" fill="#e8e0d0" stroke="#666" stroke-width=".5"/></svg>
<div class="t" style="left:882px;top:99.5px;font-size:12px;color:#f2f2f2;width:24.0px;text-align:center;">特性</div>
<div class="t" style="left:882px;top:116.5px;font-size:12px;color:#f2f2f2;width:24.0px;text-align:center;">匹配</div>
<svg class="b" style="left:916px;top:63px;" width="16" height="16" viewBox="0 0 16 16"><circle cx="8" cy="8" r="7.6" fill="#eee"/><path d="M8 8L8 .6A7.4 7.4 0 0 1 14.4 4.3Z" fill="#f0d028"/><path d="M8 8L14.4 4.3A7.4 7.4 0 0 1 14.4 11.7Z" fill="#f08028"/><path d="M8 8L14.4 11.7A7.4 7.4 0 0 1 8 15.4Z" fill="#d83868"/><path d="M8 8L8 15.4A7.4 7.4 0 0 1 1.6 11.7Z" fill="#7040c8"/><path d="M8 8L1.6 11.7A7.4 7.4 0 0 1 1.6 4.3Z" fill="#3078e0"/><path d="M8 8L1.6 4.3A7.4 7.4 0 0 1 8 .6Z" fill="#48c060"/><ellipse cx="8" cy="5" rx="5" ry="3" fill="#fff" opacity=".35"/></svg>
<svg class="b" style="left:916px;top:86px;" width="16" height="18" viewBox="0 0 16 18"><rect x="0" y="1" width="16" height="2" fill="#e4e4e4"/><rect x="0" y="6" width="16" height="3" fill="#e4e4e4"/><rect x="0" y="12" width="16" height="4.5" fill="#e4e4e4"/></svg>
<svg class="b" style="left:916px;top:111px;" width="16" height="15" viewBox="0 0 16 15"><path d="M0 1.5H16" stroke="#e4e4e4" stroke-width="1.2" stroke-dasharray="1 1"/><path d="M0 5.5H16" stroke="#e4e4e4" stroke-width="1.2" stroke-dasharray="4 1.5"/><path d="M0 9.5H16" stroke="#e4e4e4" stroke-width="1.2" stroke-dasharray="2 1 6 1"/><path d="M0 13.5H16" stroke="#e4e4e4" stroke-width="1.2" stroke-dasharray="3 2"/></svg>
<div class="combo" style="left:934px;top:60px;width:137px;height:22px"></div>
<svg class="b" style="left:1061.2px;top:69.0px;" width="7" height="4" viewBox="0 0 7 4"><path d="M0 0H7L3.5 4Z" fill="#f2f2f2"/></svg>
<div class="combo" style="left:934px;top:84.5px;width:137px;height:21px"></div>
<svg class="b" style="left:1061.2px;top:93.0px;" width="7" height="4" viewBox="0 0 7 4"><path d="M0 0H7L3.5 4Z" fill="#f2f2f2"/></svg>
<div class="combo" style="left:934px;top:108px;width:137px;height:22px"></div>
<svg class="b" style="left:1061.2px;top:117.0px;" width="7" height="4" viewBox="0 0 7 4"><path d="M0 0H7L3.5 4Z" fill="#f2f2f2"/></svg>
<div class="b " style="left:946.5px;top:63px;width:16px;height:16px;background:#00f07c;border:1px solid #8a8a8a"></div>
<div class="t" style="left:973.5px;top:65.5px;font-size:12.2px;color:#f2f2f2;">ByLayer</div>
<div class="b " style="left:943px;top:94.5px;width:59px;height:1px;background:#f0f0f0"></div>
<div class="t" style="left:1004.5px;top:89.5px;font-size:12.2px;color:#f2f2f2;">ByLayer</div>
<div class="b " style="left:943px;top:118.5px;width:59px;height:1px;background:#f0f0f0"></div>
<div class="t" style="left:1004.5px;top:113.5px;font-size:12.2px;color:#f2f2f2;">ByLayer</div>
<div class="t" style="left:948px;top:137px;font-size:12px;color:#f2f2f2;width:24.0px;text-align:center;">特性</div>
<svg class="b" style="left:978.5px;top:141.5px;" width="7" height="4" viewBox="0 0 7 4"><path d="M0 0H7L3.5 4Z" fill="#f2f2f2"/></svg>
<svg class="b" style="left:1061px;top:139.5px;" width="8" height="8" viewBox="0 0 8 8"><path d="M1 1L6 6M6 2V6H2" fill="none" stroke="#e8e8e8" stroke-width="1.2"/></svg>
<svg class="b" style="left:1077px;top:61px;" width="34" height="34" viewBox="0 0 34 34"><rect x="2" y="1.5" width="18" height="30" fill="none" stroke="#e8e8e8" stroke-width="1" stroke-dasharray="2 1.5"/><rect x="5.5" y="6" width="11" height="9" fill="#e6da84" stroke="#222" stroke-width="1"/><circle cx="10.5" cy="24.5" r="4.6" fill="#e6e9ee" stroke="#222" stroke-width="1"/><path d="M13 21L21 11" stroke="#222" stroke-width="1.2"/><path d="M21.0 1.0L21.8 9.6L26.8 5.7L22.9 10.7L31.5 11.5L22.9 12.3L26.8 17.3L21.8 13.4L21.0 22.0L20.2 13.4L15.2 17.3L19.1 12.3L10.5 11.5L19.1 10.7L15.2 5.7L20.2 9.6Z" fill="#9fd4ff" stroke="#6ab4f0" stroke-width=".6"/><circle cx="21" cy="11.5" r="4.2" fill="#dff2ff"/><circle cx="21" cy="11.5" r="2.6" fill="#fff"/></svg>
<div class="t" style="left:1089px;top:99.5px;font-size:12px;color:#f2f2f2;width:12.0px;text-align:center;">组</div>
<svg class="b" style="left:1118px;top:62px;" width="18" height="18" viewBox="0 0 18 18"><rect x="1.5" y="1.5" width="8" height="15" fill="none" stroke="#ddd" stroke-width=".8" stroke-dasharray="1.5 1"/><rect x="3" y="4" width="5" height="4" fill="#e6da84" stroke="#222" stroke-width=".6"/><circle cx="5.5" cy="12.5" r="2.3" fill="#eee" stroke="#222" stroke-width=".6"/><path d="M9 9L15.5 2.5L17 4L10.5 10.5Z" fill="#f2b83c" stroke="#7a5210" stroke-width=".4"/></svg>
<svg class="b" style="left:1118px;top:86px;" width="18" height="18" viewBox="0 0 18 18"><rect x="1.5" y="1.5" width="8" height="15" fill="none" stroke="#ddd" stroke-width=".8" stroke-dasharray="1 1"/><rect x="3.5" y="4" width="3.5" height="3.5" fill="#f4f4f4" stroke="#222" stroke-width=".5"/><circle cx="5.3" cy="12" r="2" fill="#5a8cf0" stroke="#e0e8ff" stroke-width=".5"/><path d="M11.5 5.5H16.5M14 3V8M11.5 11.5H16.5" stroke="#e8e8e8" stroke-width="1"/></svg>
<div class="b " style="left:1115px;top:108px;width:23px;height:22px;background:linear-gradient(#6c8cc8,#4f6ea6);border:1px solid #24386a;border-radius:1px"></div>
<svg class="b" style="left:1118px;top:110px;" width="18" height="18" viewBox="0 0 18 18"><rect x="1.5" y="1.5" width="7" height="15" fill="none" stroke="#8ab4ff" stroke-width=".8" stroke-dasharray="1 1"/><rect x="3" y="3.5" width="4" height="4" fill="#e6da84" stroke="#333" stroke-width=".5"/><rect x="3" y="10" width="4" height="4" fill="#f0f0f0" stroke="#333" stroke-width=".5"/><path d="M9 4.5L15.5 12L12.5 12L14 16L12.5 16.5L11 12.8L9 15Z" fill="#f4d23c" stroke="#333" stroke-width=".6"/></svg>
<div class="t" style="left:1095px;top:137px;font-size:12px;color:#f2f2f2;width:12.0px;text-align:center;">组</div>
<svg class="b" style="left:1113.5px;top:141.5px;" width="7" height="4" viewBox="0 0 7 4"><path d="M0 0H7L3.5 4Z" fill="#f2f2f2"/></svg>
<svg class="b" style="left:1151px;top:68px;" width="31" height="20" viewBox="0 0 31 20"><path d="M1.5 2V11M29.5 2V11" stroke="#f0f0f0" stroke-width="1"/><path d="M2 6.5H29" stroke="#f0f0f0" stroke-width="1"/><path d="M2 6.5L6 4V9ZM29 6.5L25 4V9Z" fill="#f0f0f0"/><rect x="1" y="13" width="29" height="5.5" fill="#f2c21c" stroke="#a87808" stroke-width=".6"/><path d="M3 13V15.5M6 13V14.5M9 13V15.5M12 13V14.5M15 13V15.5M18 13V14.5M21 13V15.5M24 13V14.5M27 13V15.5" stroke="#7a5a08" stroke-width=".6"/></svg>
<div class="t" style="left:1155px;top:99.5px;font-size:12px;color:#f2f2f2;width:24.0px;text-align:center;">测量</div>
<svg class="b" style="left:1165.2px;top:116.8px;" width="5" height="3" viewBox="0 0 5 3"><path d="M0 0H5L2.5 3Z" fill="#f2f2f2"/></svg>
<svg class="b" style="left:1194px;top:62px;" width="18" height="18" viewBox="0 0 18 18"><path d="M6.5 0V13M0 6.5H13" stroke="#f0f0f0" stroke-width="1"/><rect x="4.5" y="4.5" width="4" height="4" fill="#555" stroke="#f0f0f0"/><path d="M14 0L11 5H13L12 8.5L16.5 3.5H14.5L16 0Z" fill="#f7a81c"/><rect x="9.5" y="10.5" width="6" height="6.5" fill="#f2f2f2" stroke="#333" stroke-width=".5"/><path d="M10.5 12.5H14.5M10.5 14.5H14.5M12.5 11.5V16" stroke="#444" stroke-width=".6"/></svg>
<svg class="b" style="left:1195px;top:87px;" width="16" height="16" viewBox="0 0 16 16"><path d="M7.5 0V16M0 7.5H16" stroke="#f0f0f0" stroke-width="1"/><circle cx="7.5" cy="7.5" r="2.2" fill="#5d5d5d" stroke="#f0f0f0" stroke-width=".9"/></svg>
<svg class="b" style="left:1197px;top:112px;" width="11" height="14" viewBox="0 0 11 14"><rect x=".5" y=".5" width="10" height="13" rx="1" fill="#f2f2f4" stroke="#222" stroke-width=".8"/><rect x="2" y="2" width="7" height="3" fill="#8a92a8"/><path d="M2.5 7.5H8.5M2.5 9.5H8.5M2.5 11.5H8.5" stroke="#555" stroke-width="1" stroke-dasharray="1.5 .8"/></svg>
<div class="t" style="left:1149px;top:137px;font-size:12px;color:#f2f2f2;width:48.0px;text-align:center;">实用工具</div>
<svg class="b" style="left:1203.5px;top:141.5px;" width="7" height="4" viewBox="0 0 7 4"><path d="M0 0H7L3.5 4Z" fill="#f2f2f2"/></svg>
<svg class="b" style="left:1230px;top:61px;" width="27" height="32" viewBox="0 0 27 32"><rect x="1" y="3" width="20" height="23" rx="1.5" fill="#c8beb0" stroke="#222" stroke-width="1"/><rect x="6.5" y=".5" width="9" height="4.5" rx="2" fill="#f4f4f4" stroke="#222" stroke-width=".8"/><path d="M8.5 9.5H19.5L25.5 15.5V30.5H8.5Z" fill="#f1f2f6" stroke="#222" stroke-width="1"/><path d="M19.5 9.5V15.5H25.5Z" fill="#fff" stroke="#222" stroke-width=".6"/></svg>
<div class="t" style="left:1230.5px;top:99.5px;font-size:12px;color:#f2f2f2;width:24.0px;text-align:center;">粘贴</div>
<svg class="b" style="left:1240.5px;top:116.8px;" width="5" height="3" viewBox="0 0 5 3"><path d="M0 0H5L2.5 3Z" fill="#f2f2f2"/></svg>
<svg class="b" style="left:1270px;top:62px;" width="17" height="17" viewBox="0 0 17 17"><path d="M2 1L10 11M15 1L7 11" stroke="#f4f4f4" stroke-width="1.8"/><circle cx="4.5" cy="13.5" r="2.4" fill="none" stroke="#333" stroke-width="1.2"/><circle cx="12.5" cy="13.5" r="2.4" fill="none" stroke="#333" stroke-width="1.2"/></svg>
<svg class="b" style="left:1270px;top:87px;" width="17" height="17" viewBox="0 0 17 17"><path d="M1 1H7L10 4V11H1Z" fill="#eceef2" stroke="#444" stroke-width=".7"/><path d="M5.5 4.5H12L15.5 8V16H5.5Z" fill="#f4f5f8" stroke="#444" stroke-width=".7"/><path d="M12 4.5V8H15.5Z" fill="#fff" stroke="#444" stroke-width=".5"/></svg>
<div class="t" style="left:1237px;top:137px;font-size:12px;color:#f2f2f2;width:36.0px;text-align:center;">剪贴板</div>
<svg class="b" style="left:1310px;top:68px;" width="27" height="20" viewBox="0 0 27 20"><path d="M1 1H11V6.5H26V18.5H1Z" fill="#e9ebf1" stroke="#1c1c1c" stroke-width="1"/><path d="M1.5 1.5H10.5V7H25.5" fill="none" stroke="#fff" stroke-width="1"/></svg>
<div class="t" style="left:1311.5px;top:99.5px;font-size:12px;color:#f2f2f2;width:24.0px;text-align:center;">基点</div>
<svg class="b" style="left:1321.8px;top:116.8px;" width="5" height="3" viewBox="0 0 5 3"><path d="M0 0H5L2.5 3Z" fill="#f2f2f2"/></svg>
<div class="t" style="left:1298px;top:137px;font-size:12px;color:#f2f2f2;width:24.0px;text-align:center;">视图</div>
<svg class="b" style="left:1328.5px;top:141.5px;" width="7" height="4" viewBox="0 0 7 4"><path d="M0 0H7L3.5 4Z" fill="#f2f2f2"/></svg>
<svg class="b" style="left:1342px;top:139.5px;" width="8" height="8" viewBox="0 0 8 8"><path d="M1 1L6 6M6 2V6H2" fill="none" stroke="#e8e8e8" stroke-width="1.2"/></svg>
<div id="ftabs" class="b"></div><div id="ftline" class="b"></div>
<svg class="b" width="0" height="0"><defs><linearGradient id="tg1" x1="0" y1="0" x2="0" y2="1"><stop offset="0" stop-color="#636363"/><stop offset="1" stop-color="#4e4e4e"/></linearGradient><linearGradient id="tg2" x1="0" y1="0" x2="0" y2="1"><stop offset="0" stop-color="#8c8c8c"/><stop offset="1" stop-color="#646464"/></linearGradient></defs></svg>
<svg class="b" style="left:22px;top:157px;" width="134" height="22" viewBox="0 0 134 22"><path d="M0 22C7 22 6 0 14 0H120C128 0 127 22 134 22Z" fill="url(#tg1)" stroke="none"/></svg>
<svg class="b" style="left:148px;top:157px;" width="132" height="22" viewBox="0 0 132 22"><path d="M0 22C7 22 6 0 14 0H118C126 0 125 22 132 22Z" fill="url(#tg1)" stroke="none"/></svg>
<svg class="b" style="left:270px;top:157px;" width="171" height="23" viewBox="0 0 171 23"><path d="M0 23C7 23 6 0 14 0H157C165 0 164 23 171 23Z" fill="url(#tg2)" stroke="none"/></svg>
<svg class="b" style="left:437px;top:161px;" width="25" height="16" viewBox="0 0 25 16"><path d="M1 0H14C22 0 24 8 24 13C24 15 22 16 19 16C10 16 5 12 1 0Z" fill="#4f4f4f"/><path d="M8 8H16M12 4V12" stroke="#c4c4c4" stroke-width="1.9"/></svg>
<div class="t" style="left:42px;top:162px;font-size:12px;color:#b4b4b4;width:24.0px;text-align:center;">开始</div>
<div class="t" style="left:165px;top:162px;font-size:13px;color:#b4b4b4;">PID</div>
<svg class="b" style="left:257px;top:163.5px;" width="10" height="10" viewBox="0 0 10 10"><path d="M1.7999999999999998 1.7999999999999998L8.2 8.2M8.2 1.7999999999999998L1.7999999999999998 8.2" stroke="#333" stroke-width="1.8"/></svg>
<div class="t" style="left:288px;top:161.5px;font-size:13px;color:#f4f4f4;">Distillation Column*</div>
<svg class="b" style="left:409.5px;top:163.5px;" width="10" height="10" viewBox="0 0 10 10"><path d="M1.7999999999999998 1.7999999999999998L8.2 8.2M8.2 1.7999999999999998L1.7999999999999998 8.2" stroke="#444" stroke-width="1.8"/></svg>
<div id="draw" class="b"></div>
<div class="t" style="left:14px;top:190px;font-size:13px;color:#1e1e1e;letter-spacing:-.2px">[−][俯视][二维线框]</div>
<svg class="b" style="left:86px;top:548px;" width="80" height="78" viewBox="0 0 80 78"><g fill="none" stroke="#333" stroke-width="1"><path d="M7.5 21V70.5H58"/><rect x="3.5" y="65.5" width="8.5" height="8.5"/><path d="M8.5 3L14.5 10.5L20.5 3M14.5 10.5V16"/><path d="M62 57L74.5 69M74.5 57L62 69"/></g></svg>
<svg class="b" style="left:1293px;top:191px;" width="54" height="14" viewBox="0 0 54 14"><g fill="#f4f4f4" stroke="#333" stroke-width="1.3"><rect x="1" y="7.5" width="11" height="3.5" rx="1"/><rect x="24" y="1" width="8" height="8" rx="1"/><rect x="21" y="4" width="8.5" height="8.5" rx="1"/><rect x="23.5" y="6.5" width="3.5" height="3.5" fill="#fff"/></g><path d="M42 3.5H45L47 6L49 3.5H52L49 7.5L52 11.5H49L47 9L45 11.5H42L45 7.5Z" fill="#f4f4f4" stroke="#333" stroke-width="1.3"/></svg>
<svg class="b" style="left:1263px;top:219px;" width="82" height="82" viewBox="0 0 82 82"><circle cx="40" cy="40" r="33.5" fill="none" stroke="#f9f9f9" stroke-width="7"/></svg>
<div class="b " style="left:1287px;top:243px;width:32px;height:32px;background:#ececec;border:1px solid #8c8c8c"></div>
<div class="b " style="left:1292.5px;top:248.5px;width:20px;height:20px;background:#dde1e6"></div>
<div class="t" style="left:1295.5px;top:251px;font-size:15px;color:#a9b1b8;width:15.0px;text-align:center;">上</div>
<div class="t" style="left:1297px;top:219px;font-size:12px;color:#8e8e8e;width:12.0px;text-align:center;">北</div>
<div class="t" style="left:1262px;top:254px;font-size:12px;color:#8e8e8e;width:12.0px;text-align:center;">西</div>
<div class="t" style="left:1332px;top:254px;font-size:12px;color:#8e8e8e;width:12.0px;text-align:center;">东</div>
<div class="t" style="left:1297px;top:289px;font-size:12px;color:#8e8e8e;width:12.0px;text-align:center;">南</div>
<div class="b " style="left:1279.5px;top:314px;width:47px;height:16px;background:#e5e5f5;border-radius:4px"></div>
<div class="t" style="left:1284px;top:317px;font-size:10.5px;color:#8a8a8a;">WCS</div>
<svg class="b" style="left:1313px;top:319px;" width="10" height="7" viewBox="0 0 10 7"><path d="M.8 .8H9.2L5 5.800Z" fill="none" stroke="#a0a0a8" stroke-width="1"/></svg>
<svg class="b" style="left:1318.5px;top:354px;" width="35" height="215" viewBox="0 0 35 215"><rect x="1" y="1" width="33" height="213" rx="4" fill="#f3f3f3" stroke="#c6c6c6" stroke-width="1.6"/><circle cx="27.5" cy="7" r="3" fill="none" stroke="#d6d6d6" stroke-width="1.2"/><path d="M25.5 5L29.5 9M29.5 5L25.5 9" stroke="#d6d6d6" stroke-width=".8"/><circle cx="27.5" cy="207" r="3" fill="none" stroke="#d6d6d6" stroke-width="1.2"/><path d="M25.5 207H29.5" stroke="#d6d6d6"/><path d="M8 22H22A6 6 0 0 1 28 28V34A11 11 0 0 1 6 34V24Z" fill="none" stroke="#d6d6d6" stroke-width="1.3"/><circle cx="17" cy="32" r="7.5" fill="none" stroke="#d6d6d6" stroke-width="1.3"/><circle cx="17" cy="32" r="4" fill="none" stroke="#d6d6d6" stroke-width="1"/><path d="M15 50H20L17.5 53Z" fill="#d6d6d6"/><path d="M5 58H30" stroke="#d6d6d6"/><path d="M9 78C7 74 6 72 8 71C10 70 11 73 12 75V65C12 63 14.5 63 14.5 65V72V63C14.5 61 17 61 17 63V72V64C17 62 19.5 62 19.5 64V73V67C19.5 65 22 65 22 67V79C22 84 19 86 16 86C12 86 11 83 9 78Z" fill="none" stroke="#d6d6d6" stroke-width="1.2"/><path d="M6 92L20 106M20 92L6 106M6 92H10M6 92V96M20 92H16M20 92V96M6 106H10M6 106V102" fill="none" stroke="#d6d6d6" stroke-width="1.2"/><circle cx="22" cy="107" r="4" fill="#f3f3f3" stroke="#d6d6d6" stroke-width="1.3"/><path d="M25 110L29 114" stroke="#d6d6d6" stroke-width="2"/><path d="M15 120H20L17.5 123Z" fill="#d6d6d6"/><path d="M17.5 128L13.5 134H16V149H19V134H21.5Z" fill="none" stroke="#d6d6d6" stroke-width="1.1"/><ellipse cx="17.5" cy="142" rx="10" ry="4" fill="none" stroke="#d6d6d6" stroke-width="1.2"/><path d="M15 158H20L17.5 161Z" fill="#d6d6d6"/><path d="M5 165H30" stroke="#d6d6d6"/><rect x="6" y="171" width="5.5" height="5.5" fill="none" stroke="#d6d6d6"/><rect x="14" y="171" width="5.5" height="5.5" fill="none" stroke="#d6d6d6"/><rect x="22" y="171" width="5.5" height="5.5" fill="none" stroke="#d6d6d6"/><rect x="6" y="180" width="16" height="13" fill="none" stroke="#d6d6d6" stroke-width="1.2"/><path d="M11 183V190L18 186.5Z" fill="#d6d6d6"/></svg>
<svg class="b" style="left:924px;top:355px;" width="22" height="23" viewBox="0 0 22 23"><path d="M.8 11.300C2.500 10.300 4.300 11.300 6.700 13.800L6.900 11.500L5.600 2.600C5.500 1.900 7.200 1.700 7.400 2.500L9.300 9.300L10.900 1.500C11 .800 12.700 .800 12.700 1.500L13 9.300L14.800 2.700C15 2 16.600 2.200 16.500 3L15.900 10.200L18.800 5.500C19.200 4.900 20.600 5.400 20.300 6.200L18.200 13.500C18.200 15.500 17.600 17.600 16.200 19.300C15.300 20.400 14.300 20.800 12.500 20.800C10.500 20.900 9 20.700 8 19.600C6.400 18 5.500 15.800 4 14.200C3 13.100 1.800 12.600 .800 12.200Z" fill="#2d2d2d"/></svg>
<svg class="b" style="left:486px;top:190px" width="300" height="416" viewBox="486 190 300 416"><rect x="492.4" y="197.6" width="282.4" height="401.5" fill="none" stroke="#2a2a2a" stroke-width="1.1"/><rect x="502.2" y="207.5" width="262.6" height="381.9" fill="none" stroke="#2a2a2a" stroke-width="1.1"/><path d="M558.5 197.6V207.5M558.5 589.4V599.1M633.5 197.6V207.5M633.5 589.4V599.1M708.5 197.6V207.5M708.5 589.4V599.1M492.4 293.3H502.2M764.8 293.3H774.8M492.4 398.5H502.2M764.8 398.5H774.8M492.4 503.8H502.2M764.8 503.8H774.8M497 213V202.5H507M760 202.5H769.8V212M497.5 584.5V594.4H507M760 594.4H769.7V584" fill="none" stroke="#2a2a2a" stroke-width="1.1"/><g fill="#0000ff"><rect x="715" y="212.1" width="14" height="2.9" fill="#0000ff"/><rect x="682" y="219" width="82" height="2" fill="#0000ff"/><rect x="682" y="222.1" width="82" height="1.9" fill="#0000ff"/><rect x="696" y="224" width="55" height="3" fill="#0000ff"/><rect x="684" y="226.9" width="79" height="1.9" fill="#0000ff"/><rect x="693" y="230" width="61" height="1.9" fill="#0000ff"/><rect x="681" y="233" width="83" height="1.9" fill="#0000ff"/><rect x="692" y="234.9" width="64" height="1.9" fill="#0000ff"/><rect x="698" y="238" width="51" height="1.9" fill="#0000ff"/><rect x="682" y="241" width="82" height="2" fill="#0000ff"/><rect x="681" y="243" width="83" height="1.9" fill="#0000ff"/><rect x="706" y="246.1" width="38" height="1.8" fill="#0000ff"/><rect x="686" y="249" width="78" height="1.9" fill="#0000ff"/><rect x="708" y="250.9" width="31" height="1.9" fill="#0000ff"/><rect x="702" y="254" width="47" height="1.9" fill="#0000ff"/><rect x="715" y="257.1" width="20" height="1.9" fill="#0000ff"/></g><rect x="678.9" y="267.1" width="85.5" height="14.6" fill="none" stroke="#1c1c1c" stroke-width="0.9"/><path d="M678.9 271.8L764.4 271.8" stroke="#1c1c1c" stroke-width="0.8" /><path d="M686.5 271.8L686.5 281.7" stroke="#1c1c1c" stroke-width="0.8" /><rect x="707" y="268.3" width="30" height="2" fill="#000"/><rect x="681" y="275.2" width="3.5" height="1.6" fill="#000"/><rect x="689.5" y="273.4" width="33" height="1.6" fill="#000"/><rect x="689" y="276.4" width="29" height="1.6" fill="#000"/><path d="M678.9 281.7H764.4M678.9 286.5H764.4M678.9 291.2H764.4M678.9 296H764.4M678.9 300.8H764.4M678.9 305.6H764.4M678.9 310.3H764.4M678.9 315.1H764.4M678.9 319.9H764.4M678.9 324.6H764.4M678.9 329.4H764.4M678.9 334.2H764.4M678.9 338.9H764.4M678.9 343.7H764.4M678.9 348.5H764.4M678.9 353.2H764.4M678.9 281.7V353.2M702.3 281.7V353.2M721.7 281.7V353.2M745.4 281.7V353.2M764.4 281.7V353.2" fill="none" stroke="#000" stroke-width=".85"/><path d="M684.5 283.7h12.1M710.6 283.7h2.7M726.9 283.7h13.4M748.5 283.7h12.9M683.1 288.5h15.1M710.6 288.5h2.8M724.4 288.5h18.3M749.7 288.5h10.5M680.3 293.2h20.5M709.8 293.2h4.5M747 293.2h15.9M684.6 298h12M710 298h4M727.8 298h11.4M747.9 298h14M682.5 302.8h16.3M710.7 302.8h2.7M725.2 302.8h16.7M749.3 302.8h11.2M682.9 307.6h15.3M708.7 307.6h6.6M727.5 307.6h12.1M748.4 307.6h13M681.5 312.3h18.2M708.2 312.3h7.7M726.6 312.3h13.9M750 312.3h9.8M685.1 317.1h10.9M708.8 317.1h6.5M724.1 317.1h18.8M747.7 317.1h14.5M682.3 321.9h16.6M708.6 321.9h6.9M726.3 321.9h14.5M750.4 321.9h9.1M681.9 326.6h17.3M727.3 326.6h12.5M747.8 326.6h14.3M682.9 331.4h15.4M710.5 331.4h3M724.7 331.4h17.7M749.6 331.4h10.7M680.7 336.2h19.7M709.6 336.2h4.8M724.1 336.2h18.9M746.9 336.2h15.9M683.1 340.9h14.9M708.4 340.9h7.1M728 340.9h11.1M749.6 340.9h10.5M682.8 345.7h15.6M710.1 345.7h3.8M726.6 345.7h13.9M748.2 345.7h13.4M681.7 350.5h17.8M709.2 350.5h5.7M728.5 350.5h10.1M747.3 350.5h15.2" stroke="#000" stroke-width="2"/><path d="M678.9 353.2H764.4M678.9 357.3H764.4M678.9 361.5H764.4M678.9 365.6H764.4M678.9 369.8H764.4M678.9 373.9H764.4M678.9 378.1H764.4M678.9 382.2H764.4M678.9 386.4H764.4M678.9 390.6H764.4M678.9 394.7H764.4M678.9 353.2V394.7M686.6 353.2V394.7M693.7 353.2V394.7M700.7 353.2V394.7M712.8 353.2V394.7M722 353.2V394.7M731.4 353.2V394.7M750.8 353.2V394.7M764.4 353.2V394.7" fill="none" stroke="#000" stroke-width=".85"/><path d="M681.3 354.9h2.9M688.9 354.9h2.6M695.8 354.9h2.8M704.2 354.9h5.2M716.1 354.9h2.7M725.2 354.9h3M737 354.9h8.1M754.8 354.9h5.6M681.3 359.1h3M689 359.1h2.3M696 359.1h2.5M704 359.1h5.4M715.1 359.1h4.6M724.6 359.1h4.2M737.3 359.1h7.7M755 359.1h5.2M681.5 363.2h2.4M688.6 363.2h3.1M696.1 363.2h2.3M704.3 363.2h5M715.1 363.2h4.6M724.3 363.2h4.8M736.1 363.2h10M754 363.2h7.2M681.3 367.4h2.9M689 367.4h2.4M695.6 367.4h3.1M702.4 367.4h8.7M715.4 367.4h4M724.6 367.4h4.3M737.6 367.4h7M755 367.4h5.2M681.3 371.5h2.8M688.8 371.5h2.6M695.6 371.5h3.1M703.4 371.5h6.6M716 371.5h2.8M725 371.5h3.4M733.8 371.5h14.6M754.6 371.5h6M681.3 375.7h2.9M688.7 375.7h2.8M695.7 375.7h2.9M703.2 375.7h7.2M715.3 375.7h4.1M724.2 375.7h5.1M754.7 375.7h5.7M681.3 379.8h2.9M689 379.8h2.3M695.7 379.8h3.1M704 379.8h5.5M715.1 379.8h4.6M724.8 379.8h3.8M737.1 379.8h7.9M753.6 379.8h8M681.4 384h2.7M688.9 384h2.6M695.7 384h3M703.7 384h6.1M716 384h2.9M724.9 384h3.6M737.1 384h7.9M754.8 384h5.5M681.4 388.1h2.8M688.9 388.1h2.6M695.9 388.1h2.6M703.1 388.1h7.4M715.7 388.1h3.3M725.3 388.1h2.8M737 388.1h8.3M754.1 388.1h7M681.5 392.3h2.6M688.8 392.3h2.7M696.1 392.3h2.2M703.7 392.3h6M715.4 392.3h4.1M724.5 392.3h4.4M733.7 392.3h14.8M754.3 392.3h6.6" stroke="#000" stroke-width="1.7"/><path d="M678.9 353.2L764.4 353.2" stroke="#000" stroke-width="1.6" /><rect x="722.5" y="311" width="41.5" height="18" fill="#fff"/><rect x="728" y="312" width="8" height="5.5" fill="none" stroke="#1c1c1c" stroke-width="0.9"/><rect x="737" y="312" width="8" height="5" fill="none" stroke="#1c1c1c" stroke-width="0.9"/><rect x="747" y="312" width="7" height="5" fill="none" stroke="#1c1c1c" stroke-width="0.9"/><rect x="755" y="311.5" width="8.5" height="5" fill="none" stroke="#1c1c1c" stroke-width="0.9"/><rect x="724" y="319" width="6" height="8" fill="none" stroke="#1c1c1c" stroke-width="0.9"/><rect x="731" y="319" width="7" height="8" fill="none" stroke="#1c1c1c" stroke-width="0.9"/><rect x="739" y="320" width="6" height="7" fill="none" stroke="#1c1c1c" stroke-width="0.9"/><rect x="746" y="319" width="9" height="8" fill="none" stroke="#1c1c1c" stroke-width="0.9"/><rect x="756" y="319" width="7" height="8" fill="none" stroke="#1c1c1c" stroke-width="0.9"/><rect x="729.5" y="313" width="5" height="3" fill="#000"/><rect x="738.5" y="313.5" width="5" height="1.5" fill="#000"/><rect x="749" y="313.5" width="3.5" height="1.5" fill="#000"/><rect x="755" y="312" width="8.5" height="2.5" fill="#000"/><rect x="724" y="320" width="3" height="3" fill="#000"/><rect x="733" y="322" width="3" height="1.5" fill="#000"/><rect x="741" y="323" width="2.5" height="1.5" fill="#000"/><rect x="747" y="322" width="6" height="1.5" fill="#000"/><rect x="747" y="325.5" width="6" height="1.5" fill="#000"/><path d="M678.6 430.6H764.5M678.6 434.4H764.5M678.6 438.3H764.5M678.6 442.1H764.5M678.6 445.9H764.5M678.6 449.8H764.5M678.6 453.6H764.5M678.6 457.4H764.5M678.6 461.2H764.5M678.6 465.1H764.5M678.6 468.9H764.5M678.6 472.7H764.5M678.6 476.6H764.5M678.6 480.4H764.5M678.6 484.2H764.5M678.6 488.1H764.5M678.6 491.9H764.5M678.6 495.7H764.5M678.6 499.5H764.5M678.6 503.4H764.5M678.6 507.2H764.5M678.6 511H764.5M678.6 514.9H764.5M678.6 518.7H764.5M678.6 522.5H764.5M678.6 526.4H764.5M678.6 530.2H764.5M678.6 430.6V530.2M686.1 430.6V530.2M700.5 430.6V530.2M726.6 430.6V530.2M731.4 430.6V530.2M745.8 430.6V530.2M752.3 430.6V530.2M758.8 430.6V530.2M764.5 430.6V530.2" fill="none" stroke="#000" stroke-width=".85"/><path d="M681.1 432.2h2.5M688.1 432.2h10.3M706.4 432.2h14.2M727.9 432.2h2.3M734.4 432.2h8.3M747.7 432.2h2.7M754 432.2h3M760.7 432.2h1.8M681.4 436h2M689.1 436h8.3M703.6 436h20M728 436h2M735.3 436h6.7M747.5 436h3.1M754.4 436h2.2M760.6 436h2.2M680.9 439.9h3M688.9 439.9h8.8M706.1 439.9h14.9M728 439.9h2M735.1 439.9h7M747.7 439.9h2.7M754.6 439.9h2M760.4 439.9h2.4M681.4 443.7h1.9M701.8 443.7h23.5M728 443.7h2M734.9 443.7h7.4M748 443.7h2.1M754 443.7h3.1M760.6 443.7h2M680.9 447.5h2.9M687.5 447.5h11.7M710.4 447.5h6.3M727.9 447.5h2.1M734.5 447.5h8.3M747.6 447.5h3M754 447.5h3.1M760.3 447.5h2.7M681.2 451.4h2.3M686.9 451.4h12.9M709.7 451.4h7.6M728 451.4h2M736.7 451.4h3.8M747.9 451.4h2.2M754.4 451.4h2.3M760.6 451.4h2M681.3 455.2h2.1M689.3 455.2h8M710.8 455.2h5.5M727.9 455.2h2.2M735.8 455.2h5.6M748 455.2h2.1M754.3 455.2h2.5M760.3 455.2h2.7M681.1 459h2.4M686.7 459h13.2M703.1 459h20.9M727.9 459h2.2M736.2 459h4.9M748 459h2.1M754.1 459h2.9M760.7 459h1.9M680.9 462.8h2.8M687.6 462.8h11.5M708.7 462.8h9.8M727.9 462.8h2.1M735.9 462.8h5.4M747.4 462.8h3.2M754.2 462.8h2.7M760.2 462.8h2.8M681.2 466.7h2.3M688.3 466.7h10M706.2 466.7h14.7M727.9 466.7h2.2M736.4 466.7h4.4M747.8 466.7h2.5M754.6 466.7h2M760.7 466.7h2M681.1 470.5h2.5M687.6 470.5h11.4M702.7 470.5h21.7M728 470.5h2.1M747.6 470.5h2.9M754.5 470.5h2M760.3 470.5h2.7M681 474.3h2.7M689 474.3h8.7M706.2 474.3h14.7M727.8 474.3h2.3M735.5 474.3h6.2M747.6 474.3h2.8M754.4 474.3h2.2M760.7 474.3h1.9M681.4 478.2h2M687.9 478.2h10.9M705.1 478.2h17M727.9 478.2h2.2M734.9 478.2h7.5M747.7 478.2h2.6M754.1 478.2h2.8M760.4 478.2h2.5M681.4 482h2M687.4 482h11.8M704 482h19.1M727.9 482h2.2M735.8 482h5.6M747.6 482h2.9M754.2 482h2.8M760.7 482h1.9M681 485.8h2.7M687.8 485.8h10.9M710.4 485.8h6.4M727.9 485.8h2.2M735.2 485.8h6.8M747.7 485.8h2.6M754.3 485.8h2.6M760.3 485.8h2.7M680.9 489.7h3M689.3 489.7h8M703.2 489.7h20.6M727.9 489.7h2.1M736.6 489.7h4.1M747.9 489.7h2.2M754.5 489.7h2.1M760.3 489.7h2.8M681 493.5h2.8M687 493.5h12.6M708.8 493.5h9.6M727.9 493.5h2.2M737.1 493.5h2.9M747.8 493.5h2.5M754.5 493.5h2.1M760.6 493.5h2.1M681.4 497.3h1.9M687.1 497.3h12.4M702.2 497.3h22.6M727.8 497.3h2.4M736.1 497.3h5M747.4 497.3h3.2M754.3 497.3h2.4M760.6 497.3h2M681.4 501.1h2M688.6 501.1h9.4M708.6 501.1h9.9M727.9 501.1h2.2M736.1 501.1h5M747.5 501.1h3.1M754.2 501.1h2.8M760.3 501.1h2.8M681 505h2.7M687.4 505h11.8M703.9 505h19.4M728 505h2.1M734.5 505h8.2M747.8 505h2.6M754.4 505h2.3M760.2 505h2.8M681 508.8h2.6M687.9 508.8h10.9M709.4 508.8h8.4M728 508.8h2M735.7 508.8h5.7M747.5 508.8h3.1M760.7 508.8h1.9M681.4 512.6h2M689.1 512.6h8.4M708.5 512.6h10.1M727.8 512.6h2.3M736 512.6h5.3M747.7 512.6h2.6M754.4 512.6h2.4M760.6 512.6h2M681.3 516.5h2M687.7 516.5h11.3M708.9 516.5h9.3M728 516.5h2M735.9 516.5h5.4M747.5 516.5h3.1M754.6 516.5h2M760.4 516.5h2.5M681.1 520.3h2.4M689.3 520.3h7.9M702.2 520.3h22.6M727.8 520.3h2.3M736.4 520.3h4.3M748 520.3h2.2M754.1 520.3h2.8M760.4 520.3h2.5M681 524.1h2.7M687.9 524.1h10.9M703.6 524.1h19.9M727.8 524.1h2.4M736.3 524.1h4.6M747.9 524.1h2.3M754.1 524.1h2.9M760.8 524.1h1.8M681.1 528h2.5M688.7 528h9.1M710.8 528h5.4M727.9 528h2.1M735.3 528h6.6M747.8 528h2.6M754.4 528h2.3M760.4 528h2.5" stroke="#000" stroke-width="1.6"/><rect x="678.6" y="530.2" width="85.9" height="7.2" fill="#fff" stroke="#1c1c1c" stroke-width="0.9"/><path d="M686.1 530.2V537.4M700.5 530.2V537.4M726.6 530.2V537.4M731.4 530.2V537.4M745.8 530.2V537.4" stroke="#1c1c1c" stroke-width=".8"/><rect x="680.5" y="531.6" width="3.5" height="2.2" fill="#000"/><rect x="688.5" y="531.6" width="10" height="2.2" fill="#000"/><rect x="709" y="531.6" width="8" height="2.2" fill="#000"/><rect x="727.3" y="531.6" width="3.4" height="2.2" fill="#000"/><rect x="735" y="531.6" width="7" height="2.2" fill="#000"/><rect x="748" y="531.6" width="5" height="2.2" fill="#000"/><path d="M745.8 533.8L764.5 533.8" stroke="#1c1c1c" stroke-width="0.8" /><path d="M747 453L758 448" stroke="#1c1c1c" stroke-width="0.7" /><rect x="678.6" y="565" width="86.2" height="24.4" fill="#fff" stroke="#1c1c1c" stroke-width="1"/><path d="M678.6 570.5H720M720 565V572.5H736.5V565M736.5 572.5H764.8M708 572.5V589.4M736.5 572.5V589.4M747 576V589.4M747 576H764.8M747 579H764.8M688.5 572.5V589.4M700 572.5V589.4M678.6 574H708M678.6 576.5H708M678.6 579H708M678.6 581.5H708M678.6 584H708M678.6 586.5H708M708 586.5H764.8M715 586.5V589.4M722 586.5V589.4M729 586.5V589.4M750 586.5V589.4" fill="none" stroke="#1c1c1c" stroke-width=".8"/><rect x="722.5" y="566" width="12" height="4.5" fill="#000"/><rect x="681" y="571.5" width="4.5" height="10.5" fill="#000"/><rect x="692" y="571.5" width="5.5" height="2.5" fill="#000"/><rect x="701.5" y="571.5" width="5" height="2.5" fill="#000"/><rect x="716" y="576" width="12" height="5" fill="#000"/><rect x="737" y="571.5" width="9.5" height="5.5" fill="#000"/><rect x="737" y="580" width="9.5" height="4.5" fill="#000"/><rect x="751" y="580" width="9" height="2.2" fill="#000"/><rect x="680" y="584.5" width="6" height="1.5" fill="#000"/><rect x="680" y="587" width="6" height="1.5" fill="#000"/><rect x="737" y="577" width="9.5" height="2.5" fill="#808080"/><path d="M566 274.4H581V506.7H566" fill="none" stroke="#00ffff" stroke-width="1.3"/><path d="M553 265H569V270" fill="none" stroke="#00ffff" stroke-width="1"/><rect x="532" y="507" width="34" height="27.8" fill="none" stroke="#00ffff" stroke-width="1"/><path d="M537.8 288L537.8 506" stroke="#00ffff" stroke-width="0.9" /><path d="M534.8 287.1h3.4v2.8h-3.4zM534.8 292.6h3.4v2.8h-3.4zM534.8 298.1h3.4v2.8h-3.4zM534.8 303.4h3.4v2.8h-3.4zM534.8 308.6h3.4v2.8h-3.4zM534.8 314.3h3.4v2.8h-3.4zM534.8 319.2h3.4v2.8h-3.4zM534.8 325h3.4v2.8h-3.4zM534.8 330.1h3.4v2.8h-3.4zM534.8 351.6h3.4v2.8h-3.4zM534.8 357.5h3.4v2.8h-3.4zM534.8 362.5h3.4v2.8h-3.4zM534.8 368.4h3.4v2.8h-3.4zM534.8 373.1h3.4v2.8h-3.4zM534.8 379.3h3.4v2.8h-3.4zM534.8 384h3.4v2.8h-3.4zM534.8 389.5h3.4v2.8h-3.4zM534.8 394.7h3.4v2.8h-3.4zM534.8 418.1h3.4v2.8h-3.4zM534.8 424.4h3.4v2.8h-3.4zM534.8 429.1h3.4v2.8h-3.4zM534.8 434.9h3.4v2.8h-3.4zM534.8 440.2h3.4v2.8h-3.4zM534.8 445.1h3.4v2.8h-3.4zM534.8 468.1h3.4v2.8h-3.4zM534.8 474.1h3.4v2.8h-3.4zM534.8 479h3.4v2.8h-3.4zM534.8 340.6h3v2.6h-3zM534.8 346.6h3v2.6h-3zM534.8 406.8h3v2.6h-3zM534.8 412.8h3v2.6h-3zM534.8 457.3h3v2.6h-3zM534.8 463.3h3v2.6h-3zM534.8 494.4h3v2.6h-3zM534.8 500.4h3v2.6h-3z" fill="#00ffff"/><path d="M537.8 293.8h4M537.8 304.6h4M537.8 315.5h4M537.8 326.2h4M537.8 358.7h4M537.8 369.6h4M537.8 380.5h4M537.8 390.7h4M537.8 419.3h4M537.8 430.3h4M537.8 441.4h4M537.8 475.3h4" stroke="#00ffff" stroke-width=".8"/><path d="M539.3 506.7V274A13.05 8.7 0 0 1 565.4 274V506.7" fill="none" stroke="#0c0c0c" stroke-width="1.5"/><path d="M540.6999999999999 506V275M564.0 275V506" fill="none" stroke="#1a7a3a" stroke-width=".5"/><path d="M539.3 274.4L565.4 274.4" stroke="#1c1c1c" stroke-width="1" /><path d="M539.3 506.2L565.4 506.2" stroke="#000" stroke-width="1.5" /><path d="M539.3 506.7A13.05 8.5 0 0 0 565.4 506.7" fill="none" stroke="#1c1c1c" stroke-width="1.4"/><path d="M539.3 506.7V534.8M565.4 506.7V534.8M537 534.8H568" fill="none" stroke="#1c1c1c" stroke-width="1.3"/><path d="M539.3 288.3H550.7V292.6M565.4 288.3H554.6V292.6M541.7 298.1V293.8H562.4V298.1M539.3 299.3H550.7V303.6M565.4 299.3H554.6V303.6M541.7 308.9V304.6H562.4V308.9M539.3 309.8H550.7V314.1M565.4 309.8H554.6V314.1M541.7 319.8V315.5H562.4V319.8M539.3 320.4H550.7V324.7M565.4 320.4H554.6V324.7M541.7 330.5V326.2H562.4V330.5M539.3 331.3H550.7V335.6M565.4 331.3H554.6V335.6M539.3 352.8H550.7V357.1M565.4 352.8H554.6V357.1M541.7 363V358.7H562.4V363M539.3 363.7H550.7V368M565.4 363.7H554.6V368M541.7 373.9V369.6H562.4V373.9M539.3 374.3H550.7V378.6M565.4 374.3H554.6V378.6M541.7 384.8V380.5H562.4V384.8M539.3 385.2H550.7V389.5M565.4 385.2H554.6V389.5M541.7 395V390.7H562.4V395M539.3 395.9H550.7V400.2M565.4 395.9H554.6V400.2M541.7 423.6V419.3H562.4V423.6M539.3 425.6H550.7V429.9M565.4 425.6H554.6V429.9M541.7 434.6V430.3H562.4V434.6M539.3 436.1H550.7V440.4M565.4 436.1H554.6V440.4M541.7 445.7V441.4H562.4V445.7M539.3 446.3H550.7V450.6M565.4 446.3H554.6V450.6M539.3 469.3H550.7V473.6M565.4 469.3H554.6V473.6M541.7 479.6V475.3H562.4V479.6M539.3 480.2H550.7V484.5M565.4 480.2H554.6V484.5M541.7 350.8V335.6H562.4V350.8M541.7 415.4V401.4H562.4V415.4M541.7 465.6V451.9H562.4V465.6M541.7 487.5V503.9M562.4 487.5V503.9" fill="none" stroke="#101010" stroke-width="1.15"/><path d="M556.6 289.5V482" stroke="#ff0000" stroke-width="1.7" stroke-dasharray="2.2 3.25"/><circle cx="552.3" cy="281.7" r="5.1" fill="#fff" stroke="#0c0c0c" stroke-width="1.5"/><path d="M544.5 281.7H559.5M552.3 275.2V288.2" stroke="#ff1446" stroke-width=".8" stroke-dasharray="2.5 1"/><path d="M548 283.2L562 276.7" stroke="#00ffff" stroke-width="1.9"/><rect x="546" y="283.7" width="3" height="3" fill="#000"/><circle cx="552.3" cy="344.6" r="5.1" fill="#fff" stroke="#0c0c0c" stroke-width="1.5"/><path d="M544.5 344.6H559.5M552.3 338.1V351.1" stroke="#ff1446" stroke-width=".8" stroke-dasharray="2.5 1"/><path d="M548 346.1L562 339.6" stroke="#00ffff" stroke-width="1.9"/><rect x="546" y="346.6" width="3" height="3" fill="#000"/><circle cx="552.3" cy="410.8" r="5.1" fill="#fff" stroke="#0c0c0c" stroke-width="1.5"/><path d="M544.5 410.8H559.5M552.3 404.3V417.3" stroke="#ff1446" stroke-width=".8" stroke-dasharray="2.5 1"/><path d="M548 412.3L562 405.8" stroke="#00ffff" stroke-width="1.9"/><rect x="546" y="412.8" width="3" height="3" fill="#000"/><circle cx="552.3" cy="461.3" r="5.1" fill="#fff" stroke="#0c0c0c" stroke-width="1.5"/><path d="M544.5 461.3H559.5M552.3 454.8V467.8" stroke="#ff1446" stroke-width=".8" stroke-dasharray="2.5 1"/><path d="M548 462.8L562 456.3" stroke="#00ffff" stroke-width="1.9"/><rect x="546" y="463.3" width="3" height="3" fill="#000"/><circle cx="552.3" cy="498.4" r="5.1" fill="#fff" stroke="#0c0c0c" stroke-width="1.5"/><path d="M544.5 498.4H559.5M552.3 491.9V504.9" stroke="#ff1446" stroke-width=".8" stroke-dasharray="2.5 1"/><path d="M548 499.9L562 493.4" stroke="#00ffff" stroke-width="1.9"/><rect x="546" y="500.4" width="3" height="3" fill="#000"/><rect x="549.5" y="260.5" width="5.5" height="3.3" fill="#fff" stroke="#1c1c1c" stroke-width="1"/><rect x="549" y="256" width="5" height="3" fill="#00ffff"/><rect x="543" y="246.8" width="6" height="3" fill="#00ffff"/><rect x="549" y="268.5" width="6" height="3" fill="#00ffff"/><rect x="543" y="261" width="2" height="3" fill="#00ffff"/><rect x="554.5" y="262" width="3" height="3" fill="#00ffff"/><path d="M537.8 273V257C537.8 253.8 539.5 252.3 542.5 252.3H551.5" fill="none" stroke="#8a1830" stroke-width="1.4"/><path d="M537.8 261V273" fill="none" stroke="#141414" stroke-width="1.3" stroke-dasharray="2.2 1.2"/><path d="M535.5 257.3H538.5" stroke="#ff1446" stroke-width=".8"/><rect x="550.5" y="250.3" width="2.5" height="4.2" fill="#000"/><path d="M537.3 249.8H552M537.3 249.8V254" fill="none" stroke="#00ffff" stroke-width=".8"/><rect x="536.5" y="268" width="3" height="2" fill="#000"/><rect x="536.5" y="274.5" width="3" height="3" fill="none" stroke="#1c1c1c" stroke-width="0.9"/><rect x="536.5" y="279" width="3" height="4" fill="#000"/><circle cx="540" cy="257.5" r="1.3" fill="#000"/><path d="M565.5 269.5L575 266.5M566 288L575 291M566 289L571 293M530 281L538 279.5M528.5 414.5L547 411.8M533 425L539 424M562 363L569 363M562 438L569 440M566 513L583 522M566 516L584 527.5M566 519.5L584 531.5M566 523L578 533M540 512L533 506.5M566 499L570 492M547 264L549.5 259M556.5 262L558 258M560 263.5L562 260" fill="none" stroke="#0000ff" stroke-width=".7"/><rect x="573" y="265.5" width="2" height="1.5" fill="#0000ff"/><rect x="574" y="289.5" width="2" height="1.5" fill="#0000ff"/><rect x="529" y="280" width="1.5" height="1.5" fill="#0000ff"/><rect x="525.5" y="298" width="1.5" height="1.5" fill="#0000ff"/><rect x="527" y="413.5" width="2" height="1.5" fill="#0000ff"/><rect x="532" y="424" width="1.5" height="1.5" fill="#0000ff"/><rect x="569.5" y="362" width="2" height="2" fill="#0000ff"/><rect x="569" y="439" width="2" height="2" fill="#0000ff"/><rect x="583" y="521" width="1.5" height="1.5" fill="#0000ff"/><rect x="584" y="527" width="1.5" height="1.5" fill="#0000ff"/><rect x="584" y="531" width="1.5" height="1.5" fill="#0000ff"/><rect x="531.5" y="505" width="2" height="2" fill="#0000ff"/><rect x="569" y="489" width="1.5" height="3.5" fill="#0000ff"/><rect x="557" y="257" width="1.5" height="1.5" fill="#0000ff"/><rect x="562" y="258.5" width="1.5" height="2" fill="#0000ff"/><rect x="535" y="527" width="2.5" height="2.5" fill="#0000ff"/><rect x="563" y="527" width="2.5" height="2.5" fill="#0000ff"/><path d="M562 363H566M562 438H567" stroke="#000" stroke-width="1.8"/><path d="M566 497H571M566 502H571" stroke="#ff1446" stroke-width="1"/><path d="M549 515.5V522.5C549 524 550 525 551.5 525H566" fill="none" stroke="#3a0010" stroke-width="1.9"/><path d="M550.5 516V522.5C550.5 523.2 551 523.7 551.5 523.7H563" fill="none" stroke="#ff1446" stroke-width=".8"/><path d="M546.5 515.3H553" stroke="#1c1c1c" stroke-width="1"/><path d="M538 528.6H566" stroke="#ff1446" stroke-width="1" stroke-dasharray="5 1.5 1.5 1.5"/><circle cx="565.5" cy="533" r="2" fill="none" stroke="#00ffff" stroke-width="1"/><circle cx="565" cy="524.5" r="2" fill="none" stroke="#00ffff" stroke-width=".8"/><path d="M634.1 377V439M602.3 406.4H660.7" stroke="#ff1446" stroke-width="1.3" stroke-dasharray="5 2.2"/><path d="M639.8 412.1L656.4 428.7M628.4 412.1L611.8 428.7M628.4 400.7L611.8 384.1M639.8 400.7L656.4 384.1" stroke="#ff1446" stroke-width=".9"/><circle cx="634.1" cy="406.4" r="24.3" fill="none" stroke="#161616" stroke-width="2.8"/><circle cx="634.1" cy="406.4" r="24.3" fill="none" stroke="#3a46d8" stroke-width="1.2" stroke-dasharray="1 2.8"/><circle cx="634.1" cy="406.4" r="7.3" fill="none" stroke="#1c1c1c" stroke-width="1.2"/><circle cx="634.1" cy="406.4" r="4.5" fill="none" stroke="#1c1c1c" stroke-width="1.1"/><circle cx="634.1" cy="406.4" r="2.3" fill="none" stroke="#30308a" stroke-width="1"/><path d="M606.5 404.8H630.1M606.5 408H630.1" stroke="#1c1c1c" stroke-width="1.1"/><path d="M604 406.4L608 403.5V409.3Z" fill="#ff1446"/><path d="M661.5 402.5V410.5" stroke="#1c1c1c" stroke-width="1.6"/><circle cx="661.5" cy="402.3" r="1" fill="#ff1446"/><circle cx="661.5" cy="410.8" r="1" fill="#ff1446"/><rect x="657" y="404.5" width="3" height="4" fill="#3a46d8"/><rect x="632.8" y="418.5" width="2.6" height="4" fill="#2030d0"/><rect x="632.5" y="381" width="3" height="2.5" fill="#2030d0"/><path d="M646 403.5L647.5 408.5" stroke="#000" stroke-width="1.3"/><rect x="610" y="380" width="6" height="2.5" fill="#0a8080"/><rect x="656" y="380" width="5" height="2.5" fill="#0a8080"/><rect x="609" y="427" width="6" height="2.5" fill="#0a8080"/><rect x="656" y="428" width="6" height="2.5" fill="#0a8080"/><rect x="597" y="404.5" width="4" height="2.5" fill="#0a8080"/><rect x="632" y="373" width="3" height="2.5" fill="#0a8080"/><rect x="636" y="375.5" width="4" height="1.5" fill="#000"/><rect x="665" y="408" width="6" height="1.5" fill="#000"/><rect x="603.5" y="400.8" width="2.5" height="1.5" fill="#000"/><rect x="666" y="404.8" width="2.5" height="1.5" fill="#000"/><path d="M618 472H645M618 480.6H645M633.7 461V470M633.7 483V490" stroke="#1c1c1c" stroke-width="1.2"/><rect x="630.3" y="469" width="7" height="3" fill="#fff" stroke="#1c1c1c" stroke-width="1"/><rect x="630.3" y="480.6" width="7" height="3" fill="#fff" stroke="#1c1c1c" stroke-width="1"/><path d="M643 472H653.7V480.6H643" fill="none" stroke="#00ffff" stroke-width="1.1"/><rect x="651.3" y="474" width="1.5" height="5" fill="#00ffff"/><rect x="643" y="482" width="2" height="1.8" fill="#00ffff"/><rect x="635" y="486" width="2" height="3" fill="#00ffff"/><circle cx="633.7" cy="476.5" r="15.7" fill="none" stroke="#00ffff" stroke-width="1.2"/><rect x="632" y="494.3" width="5" height="2.3" fill="#000"/><path d="M633 521.5V524M633 537.6V556" stroke="#1c1c1c" stroke-width="1.2"/><rect x="629.3" y="524" width="6.9" height="13.6" fill="#fff" stroke="#1c1c1c" stroke-width="1.2"/><path d="M625 530.3H640" stroke="#ff1446" stroke-width="1" stroke-dasharray="4 1.5 1 1.5"/><path d="M636 524.7H643V537.6H636" fill="none" stroke="#00ffff" stroke-width="1.1"/><rect x="642" y="528" width="1.5" height="5" fill="#00ffff"/><rect x="634" y="542.5" width="4" height="2.5" fill="#00ffff"/><path d="M620.5 556.7H634" stroke="#1c1c1c" stroke-width="1.8"/><path d="M634.3 546.5H638.5V557.5H634.3Z" fill="#fff" stroke="#1c1c1c" stroke-width="1.3"/><path d="M636.5 546.5L637.5 558" stroke="#ff1446" stroke-width="1.1"/><path d="M633.5 544.5V548" stroke="#00ffff" stroke-width="1.5"/><circle cx="633.4" cy="541.7" r="20.4" fill="none" stroke="#00ffff" stroke-width="1.2"/><rect x="632.5" y="564.5" width="4.5" height="2.3" fill="#000"/></svg>
<div id="cmd" class="b"></div><div id="cmdl" class="b"></div><div id="cmdhist" class="b"></div><div id="cmdin" class="b"></div>
<svg class="b" style="left:13px;top:633px;" width="17" height="6" viewBox="0 0 17 6"><g fill="#8c8c8c"><rect x="0" y="0.0" width="1.2" height="1.2"/><rect x="0" y="2.5" width="1.2" height="1.2"/><rect x="2" y="0.0" width="1.2" height="1.2"/><rect x="2" y="2.5" width="1.2" height="1.2"/><rect x="4" y="0.0" width="1.2" height="1.2"/><rect x="4" y="2.5" width="1.2" height="1.2"/><rect x="6" y="0.0" width="1.2" height="1.2"/><rect x="6" y="2.5" width="1.2" height="1.2"/><rect x="8" y="0.0" width="1.2" height="1.2"/><rect x="8" y="2.5" width="1.2" height="1.2"/><rect x="10" y="0.0" width="1.2" height="1.2"/><rect x="10" y="2.5" width="1.2" height="1.2"/><rect x="12" y="0.0" width="1.2" height="1.2"/><rect x="12" y="2.5" width="1.2" height="1.2"/><rect x="14" y="0.0" width="1.2" height="1.2"/><rect x="14" y="2.5" width="1.2" height="1.2"/></g></svg>
<svg class="b" style="left:16px;top:646px;" width="11" height="11" viewBox="0 0 11 11"><path d="M1.5 2L9.5 9.5M9.5 2L1.5 9.5" stroke="#f4f4f4" stroke-width="2.2"/></svg>
<svg class="b" style="left:14px;top:663px;" width="16" height="17" viewBox="0 0 16 17"><path d="M3 1C1 2.5 .5 5 2 7C3 8 4.5 8.5 6 8L12.5 15.5C13.5 16.5 15.5 15 14.5 13.5L8 6.5C8.5 5 8 3 6.5 1.8L6.5 5L4 5.5L2.5 4Z" fill="#f4f4f4" stroke="#333" stroke-width=".5"/></svg>
<div class="t" style="left:36px;top:642.5px;font-size:12.7px;color:#1a1a1a;">按<span style="font-family:'Liberation Mono',monospace;font-size:11.67px"> Esc </span>或<span style="font-family:'Liberation Mono',monospace;font-size:11.67px"> Enter </span>键退出，或单击右键显示快捷菜单。</div>
<svg class="b" style="left:38px;top:661px;" width="17" height="17" viewBox="0 0 17 17"><path d="M5 10.5C3.5 8.5 2 7 3 6C4 5.2 5.5 6.5 6.5 8L5.5 3C5.2 1.5 7 1.2 7.3 2.7L8.2 6.5L8 1.6C8 .2 9.8 .2 9.9 1.6L10.3 6.5L11.3 2.3C11.7 1 13.3 1.4 13 2.8L12.3 7L13.6 4.5C14.3 3.3 15.6 4 15.1 5.3L13.8 9.5C13.8 12.5 12.5 15 11.5 16H7C6.5 14 6 12 5 10.5Z" fill="#fff" stroke="#222" stroke-width=".9"/></svg>
<svg class="b" style="left:57.0px;top:668.25px;" width="6" height="3.5" viewBox="0 0 6 3.5"><path d="M0 0H6L3.0 3.5Z" fill="#8a8a8a"/></svg>
<div class="t" style="left:69.5px;top:664px;font-size:11.5px;color:#111;font-family:'Liberation Mono',monospace;font-weight:bold">PAN</div>
<svg class="b" width="0" height="0"><defs><linearGradient id="lg1" x1="0" y1="0" x2="0" y2="1"><stop offset="0" stop-color="#5c5c5c"/><stop offset=".8" stop-color="#828282"/><stop offset="1" stop-color="#9a9a9a"/></linearGradient><linearGradient id="lg2" x1="0" y1="0" x2="0" y2="1"><stop offset="0" stop-color="#4a4a4a"/><stop offset=".8" stop-color="#666"/><stop offset="1" stop-color="#787878"/></linearGradient></defs></svg>
<svg class="b" style="left:68px;top:681px;" width="56" height="19" viewBox="0 0 56 19"><path d="M0 0C8 0 7 19 16 19H40C49 19 48 0 56 0Z" fill="url(#lg2)"/></svg>
<svg class="b" style="left:121px;top:681px;" width="56" height="19" viewBox="0 0 56 19"><path d="M0 0C8 0 7 19 16 19H40C49 19 48 0 56 0Z" fill="url(#lg2)"/></svg>
<svg class="b" style="left:16px;top:681px;" width="56" height="19" viewBox="0 0 56 19"><path d="M0 0C8 0 7 19 16 19H40C49 19 48 0 56 0Z" fill="url(#lg1)"/></svg>
<svg class="b" style="left:180px;top:683px;" width="24" height="15" viewBox="0 0 24 15"><path d="M7 0H22C24 0 24 2 23 5C22 10 20 15 14 15H3C0 15 0 13 1.5 10C3 6 4 0 7 0Z" fill="#5c5c5c"/><path d="M8 7.5H16M12 3.5V11.5" stroke="#e0e0e0" stroke-width="1.8"/></svg>
<div class="t" style="left:33.5px;top:685px;font-size:12px;color:#fff;width:24.0px;text-align:center;font-weight:bold">模型</div>
<div class="t" style="left:80px;top:685px;font-size:12px;color:#b8b8b8;width:30.7px;text-align:center;">布局1</div>
<div class="t" style="left:134.5px;top:685px;font-size:12px;color:#b8b8b8;width:30.7px;text-align:center;">布局2</div>
<div class="sg" style="left:786px;width:29px"></div>
<div class="sg" style="left:816px;width:65px"></div>
<div class="sg" style="left:883px;width:103px"></div>
<div class="sg" style="left:986px;width:64px"></div>
<div class="sg" style="left:1051px;width:107px"></div>
<div class="sg" style="left:1159px;width:41px"></div>
<div class="sg" style="left:1199px;width:27px"></div>
<div class="sg" style="left:1226px;width:27px"></div>
<div class="sg" style="left:1253px;width:27px"></div>
<div class="sg" style="left:1280px;width:25px"></div>
<div class="sg" style="left:1305px;width:51px"></div>
<div class="t" style="left:790px;top:710px;font-size:12px;color:#fff;width:24.0px;text-align:center;font-weight:bold">模型</div>
<svg class="b" style="left:821px;top:709px;" width="15" height="15" viewBox="0 0 15 15"><path d="M1.5 0V15M5.5 0V15M9.5 0V15M13.5 0V15" stroke="#e8e8e8" stroke-width="1.2" stroke-dasharray="2 1"/></svg>
<svg class="b" style="left:846px;top:709px;" width="14" height="15" viewBox="0 0 14 15"><g fill="#cfcfcf"><rect x="0.0" y="0.5" width="1.1" height="1.1"/><rect x="0.0" y="3.1" width="1.1" height="1.1"/><rect x="0.0" y="5.7" width="1.1" height="1.1"/><rect x="0.0" y="8.3" width="1.1" height="1.1"/><rect x="0.0" y="10.9" width="1.1" height="1.1"/><rect x="0.0" y="13.5" width="1.1" height="1.1"/><rect x="2.6" y="0.5" width="1.1" height="1.1"/><rect x="2.6" y="3.1" width="1.1" height="1.1"/><rect x="2.6" y="5.7" width="1.1" height="1.1"/><rect x="2.6" y="8.3" width="1.1" height="1.1"/><rect x="2.6" y="10.9" width="1.1" height="1.1"/><rect x="2.6" y="13.5" width="1.1" height="1.1"/><rect x="5.2" y="0.5" width="1.1" height="1.1"/><rect x="5.2" y="3.1" width="1.1" height="1.1"/><rect x="5.2" y="5.7" width="1.1" height="1.1"/><rect x="5.2" y="8.3" width="1.1" height="1.1"/><rect x="5.2" y="10.9" width="1.1" height="1.1"/><rect x="5.2" y="13.5" width="1.1" height="1.1"/><rect x="7.800000000000001" y="0.5" width="1.1" height="1.1"/><rect x="7.800000000000001" y="3.1" width="1.1" height="1.1"/><rect x="7.800000000000001" y="5.7" width="1.1" height="1.1"/><rect x="7.800000000000001" y="8.3" width="1.1" height="1.1"/><rect x="7.800000000000001" y="10.9" width="1.1" height="1.1"/><rect x="7.800000000000001" y="13.5" width="1.1" height="1.1"/><rect x="10.4" y="0.5" width="1.1" height="1.1"/><rect x="10.4" y="3.1" width="1.1" height="1.1"/><rect x="10.4" y="5.7" width="1.1" height="1.1"/><rect x="10.4" y="8.3" width="1.1" height="1.1"/><rect x="10.4" y="10.9" width="1.1" height="1.1"/><rect x="10.4" y="13.5" width="1.1" height="1.1"/><rect x="13.0" y="0.5" width="1.1" height="1.1"/><rect x="13.0" y="3.1" width="1.1" height="1.1"/><rect x="13.0" y="5.7" width="1.1" height="1.1"/><rect x="13.0" y="8.3" width="1.1" height="1.1"/><rect x="13.0" y="10.9" width="1.1" height="1.1"/><rect x="13.0" y="13.5" width="1.1" height="1.1"/></g></svg>
<svg class="b" style="left:869.2px;top:714.0px;" width="7" height="4" viewBox="0 0 7 4"><path d="M0 0H7L3.5 4Z" fill="#e8e8e8"/></svg>
<svg class="b" style="left:889px;top:708px;" width="14" height="15" viewBox="0 0 14 15"><path d="M1.5 0V13.5H13" fill="none" stroke="#e8e8e8" stroke-width="1.2"/><path d="M1.5 9.5H5.5V13.5" fill="none" stroke="#e8e8e8" stroke-width="1"/></svg>
<svg class="b" style="left:911px;top:707px;" width="17" height="17" viewBox="0 0 17 17"><circle cx="8" cy="9" r="6.5" fill="none" stroke="#1e90ff" stroke-width="1.6"/><path d="M8 9H15M8 9L14.5 2" stroke="#1e90ff" stroke-width="1.4"/></svg>
<svg class="b" style="left:935.1px;top:714.0px;" width="7" height="4" viewBox="0 0 7 4"><path d="M0 0H7L3.5 4Z" fill="#e8e8e8"/></svg>
<svg class="b" style="left:949px;top:705px;" width="20" height="21" viewBox="0 0 20 21"><path d="M10 0V21" stroke="#d8d8d8" stroke-width="1.2"/><path d="M2 3L18 19" stroke="#a8a8a8" stroke-width="1.4"/><circle cx="10" cy="11" r="1.3" fill="#fff"/></svg>
<svg class="b" style="left:974.2px;top:714.0px;" width="7" height="4" viewBox="0 0 7 4"><path d="M0 0H7L3.5 4Z" fill="#e8e8e8"/></svg>
<svg class="b" style="left:989px;top:708px;" width="18" height="16" viewBox="0 0 18 16"><path d="M1 14.5H17M1 14.5L15 1" fill="none" stroke="#1e90ff" stroke-width="1.5"/><rect x="6" y="7" width="3" height="3" fill="#1e90ff"/></svg>
<svg class="b" style="left:1014px;top:707px;" width="17" height="17" viewBox="0 0 17 17"><rect x="2.5" y="2.5" width="13" height="13" fill="none" stroke="#1e90ff" stroke-width="1.5"/><rect x=".5" y=".5" width="4" height="4" fill="#10c020" stroke="#063"/></svg>
<svg class="b" style="left:1037.9px;top:714.0px;" width="7" height="4" viewBox="0 0 7 4"><path d="M0 0H7L3.5 4Z" fill="#e8e8e8"/></svg>
<svg class="b" style="left:1055px;top:704px;" width="19" height="21" viewBox="0 0 19 21"><path d="M9 2L10.6 8.5C11 10.5 12.5 12.5 17 18.7L10.2 15L9 13.8L7.8 15L1 18.7C5.5 12.5 7 10.5 7.4 8.5Z" fill="none" stroke="#0f57a8" stroke-width="2.6" stroke-linejoin="round"/><path d="M9 2L10.6 8.5C11 10.5 12.5 12.5 17 18.7L10.2 15L9 13.8L7.8 15L1 18.7C5.5 12.5 7 10.5 7.4 8.5Z" fill="#1e90ff"/><circle cx="13" cy="8" r="2.7" fill="#4b4b4b" stroke="#0f57a8" stroke-width="3"/><circle cx="13" cy="8" r="2.7" fill="none" stroke="#1e90ff" stroke-width="1.4"/></svg>
<svg class="b" style="left:1079px;top:705px;" width="19" height="21" viewBox="0 0 19 21"><path d="M9 2L10.6 8.5C11 10.5 12.5 12.5 17 18.7L10.2 15L9 13.8L7.8 15L1 18.7C5.5 12.5 7 10.5 7.4 8.5Z" fill="#d2d2d2"/><path d="M13.5 2.5L10.5 7H13L11 12L16.5 6H13.8L15.5 2.5Z" fill="#4b4b4b"/><path d="M14 3.5L11.8 6.5H14L12.5 10L15.5 6.5H13.2L14.8 3.5Z" fill="#d2d2d2"/></svg>
<svg class="b" style="left:1103px;top:705px;" width="19" height="21" viewBox="0 0 19 21"><path d="M9 2L10.6 8.5C11 10.5 12.5 12.5 17 18.7L10.2 15L9 13.8L7.8 15L1 18.7C5.5 12.5 7 10.5 7.4 8.5Z" fill="#d2d2d2"/></svg>
<div class="t" style="left:1129.5px;top:710px;font-size:12px;color:#f4f4f4;letter-spacing:-.8px">1:1</div>
<svg class="b" style="left:1146.3px;top:714.0px;" width="7" height="4" viewBox="0 0 7 4"><path d="M0 0H7L3.5 4Z" fill="#e8e8e8"/></svg>
<svg class="b" style="left:1165px;top:709px;" width="14" height="14" viewBox="0 0 14 14"><g transform="translate(7 7)"><g fill="#c8c8c8"><rect x="-1.7" y="-7" width="3.4" height="4" transform="rotate(0)"/><rect x="-1.7" y="-7" width="3.4" height="4" transform="rotate(45)"/><rect x="-1.7" y="-7" width="3.4" height="4" transform="rotate(90)"/><rect x="-1.7" y="-7" width="3.4" height="4" transform="rotate(135)"/><rect x="-1.7" y="-7" width="3.4" height="4" transform="rotate(180)"/><rect x="-1.7" y="-7" width="3.4" height="4" transform="rotate(225)"/><rect x="-1.7" y="-7" width="3.4" height="4" transform="rotate(270)"/><rect x="-1.7" y="-7" width="3.4" height="4" transform="rotate(315)"/></g><circle r="5" fill="#c8c8c8"/><circle r="2" fill="#4b4b4b"/></g></svg>
<svg class="b" style="left:1188.1px;top:714.0px;" width="7" height="4" viewBox="0 0 7 4"><path d="M0 0H7L3.5 4Z" fill="#e8e8e8"/></svg>
<svg class="b" style="left:1205px;top:709px;" width="14" height="14" viewBox="0 0 14 14"><path d="M7 0V14M0 7H14" stroke="#e8e8e8" stroke-width="1.6"/></svg>
<svg class="b" style="left:1231px;top:708px;" width="16" height="16" viewBox="0 0 16 16"><rect x="1" y="1" width="6" height="6" fill="none" stroke="#e8e8e8" stroke-width="1.1"/><circle cx="11.5" cy="6.5" r="3" fill="none" stroke="#e8e8e8" stroke-width="1.1"/><path d="M5.5 9.5L9 15H2Z" fill="none" stroke="#e8e8e8" stroke-width="1.1"/></svg>
<svg class="b" style="left:1258px;top:708px;" width="17" height="17" viewBox="0 0 17 17"><circle cx="8.5" cy="8.5" r="7.3" fill="#0c4fa0" stroke="#1e90ff" stroke-width="1.5"/><path d="M7 10L11.5 6.5" stroke="#1e90ff" stroke-width="1.3"/></svg>
<svg class="b" style="left:1284px;top:707px;" width="18" height="18" viewBox="0 0 18 18"><rect x="3" y="2" width="9" height="8" fill="#e8eef8" stroke="#88a" stroke-width=".6"/><path d="M1.5 4.5H8M4.5 1.5V8" stroke="#fff" stroke-width="1"/><rect x="3" y="10" width="11" height="6" fill="#e8b820"/><path d="M8.5 13.5L11 16L16 10.5" fill="none" stroke="#18a828" stroke-width="1.8"/></svg>
<svg class="b" style="left:1309px;top:709px;" width="18" height="14" viewBox="0 0 18 14"><rect x=".6" y=".6" width="16.8" height="12.8" fill="none" stroke="#e8e8e8" stroke-width="1.2"/><path d="M9.5 6.5L14 2.5M11 2.5H14V5.5M8 7.5L4 11M4 8.5V11H7" fill="none" stroke="#e8e8e8" stroke-width="1.3"/></svg>
<svg class="b" style="left:1335px;top:710px;" width="15" height="13" viewBox="0 0 15 13"><path d="M0 1.5H15M0 6.5H15M0 11.5H15" stroke="#e8e8e8" stroke-width="1.6"/></svg>
<div id="task" class="b"></div>
<div class="b " style="left:905px;top:731px;width:110px;height:7px;background:radial-gradient(ellipse at center,#1e2c1a,#0f0f11 70%)"></div>
<svg class="b" style="left:10px;top:745px;" width="16" height="16" viewBox="0 0 16 16"><path d="M0 2.3L6.8 1.3V7.6H0ZM7.6 1.2L16 0V7.6H7.6ZM0 8.4H6.8V14.7L0 13.7ZM7.6 8.4H16V16L7.6 14.8Z" fill="#fff"/></svg>
<svg class="b" style="left:45px;top:744px;" width="18" height="18" viewBox="0 0 18 18"><circle cx="9" cy="9" r="6.7" fill="none" stroke="#fff" stroke-width="2.1"/></svg>
<svg class="b" style="left:80px;top:745px;" width="21" height="15" viewBox="0 0 21 15"><rect x="4.5" y=".8" width="12" height="13.4" fill="none" stroke="#fff" stroke-width="1.3"/><path d="M2.5 3H.7V12H2.5M18.5 3H20.3V12H18.5" fill="none" stroke="#fff" stroke-width="1.2"/></svg>
<svg class="b" style="left:121px;top:745px;" width="16" height="16" viewBox="0 0 16 16"><path d="M.5 7.3C1.2 2.8 4.5 0 8.5 0C13 0 15.5 3.5 15.5 7.5V9.5H5.2C5.5 12 7.5 13.3 10 13.3C12 13.3 13.6 12.7 14.8 12V15C13.4 15.7 11.6 16 9.7 16C5 16 1.8 13 1.8 9C1.8 6.5 3.3 4.6 5 3.6C3 4 1.3 5.5 .5 7.3ZM5.3 6.6H11.2C11.2 4.5 10 3.3 8.3 3.3C6.6 3.3 5.5 4.7 5.3 6.6Z" fill="#0a78d7"/></svg>
<svg class="b" style="left:157px;top:745px;" width="18" height="15" viewBox="0 0 18 15"><path d="M.5 1.5C.5 .9 .9 .5 1.5 .5H6L7.5 2.5H16.5C17.1 2.5 17.5 2.9 17.5 3.5V13.5H.5Z" fill="#f7d67a"/><rect x=".5" y="4" width="17" height="10" fill="#fbe6a2"/><path d="M3.5 14.5V9H14.5V14.5H11.5V11.5H6.5V14.5Z" fill="#35a0e8"/><rect x="2" y="1.5" width="3" height="1" fill="#5ab0f0"/></svg>
<svg class="b" style="left:195px;top:744px;" width="16" height="17" viewBox="0 0 16 17"><path d="M4.5 5V3.5A3.5 3 0 0 1 11.5 3.5V5" fill="none" stroke="#fff" stroke-width="1.1"/><path d="M.5 5L15.5 4V17L.5 15.5Z" fill="#fff"/><path d="M3.5 7.5L7.3 7.2V10.3H3.5ZM8.3 7.1L12.5 6.8V10.3H8.3ZM3.5 11.2H7.3V14.4L3.5 14ZM8.3 11.2H12.5V14.9L8.3 14.5Z" fill="#0b0b0b"/></svg>
<svg class="b" style="left:232px;top:745px;" width="17" height="16" viewBox="0 0 17 16"><rect x="8" y="2" width="8.5" height="12" fill="#fff" stroke="#1e7145" stroke-width=".8"/><path d="M9.5 4.5H15.5M9.5 7H15.5M9.5 9.5H15.5M9.5 12H15.5M12.5 2.5V13.5" stroke="#1e7145" stroke-width=".8"/><path d="M0 1.8L10 0V16L0 14.2Z" fill="#1e7145"/><path d="M2.8 4.8L7.2 11.2M7.2 4.8L2.8 11.2" stroke="#fff" stroke-width="1.5"/></svg>
<svg class="b" style="left:269px;top:745px;" width="17" height="16" viewBox="0 0 17 16"><rect width="16.5" height="16" fill="#f5a21c"/><path d="M0 6L8 2.5L12 10L12.5 16H7L0 13Z" fill="#2a5ad8"/><path d="M.5 7.5L11 5M.5 10L11.5 8M1 12.5L12 11" stroke="#9cc4ff" stroke-width="1.1"/><rect x="6" y=".5" width="8" height="7.5" rx="2" fill="#1c40c0"/><ellipse cx="10" cy="1.8" rx="4" ry="1.3" fill="#8ab0ff"/><rect x="7.5" y="3.5" width="5" height="3" fill="#e8f0ff"/></svg>
<svg class="b" style="left:306px;top:745px;" width="16" height="16" viewBox="0 0 16 16"><path d="M1 2.5L4 .5H15.5V5.5H4L1 7.5Z" fill="#a8107a"/><rect x="5.5" y="1.5" width="3" height="1.2" fill="#e8e020"/><path d="M1 7.5L4 5.8H15.5V10.5H4L1 12.5Z" fill="#2068c8"/><path d="M1 12.5L4 10.8H15.5V15.5H4L1 16Z" fill="#10885a"/><path d="M1 2.5L4 .5V16H2.5L1 15Z" fill="#f0f0f0"/><path d="M1 5.5L4 4M1 8L4 6.5M1 10.5L4 9M1 13L4 11.5" stroke="#333" stroke-width=".8"/><path d="M4 5.5H15.5M4 10.5H15.5" stroke="#ddd" stroke-width=".7"/></svg>
<div class="b " style="left:333px;top:738px;width:32.5px;height:30px;background:#393939"></div>
<div class="b " style="left:365.5px;top:738px;width:3.5px;height:30px;background:#2a2a2a"></div>
<div class="b " style="left:343px;top:745px;width:16px;height:16.5px;background:#f1d9d5"></div>
<svg class="b" style="left:345px;top:747px;" width="12" height="13" viewBox="0 0 12 13"><path d="M4.5 0H7.5L12 13H9L8 10H3.8L2.8 13H0ZM6 3L4.5 7.5H7.5Z" fill="#c8141c" fill-rule="evenodd"/></svg>
<div class="b " style="left:115px;top:766px;width:28px;height:2px;background:#e6f2b4"></div>
<div class="b " style="left:226px;top:766px;width:28px;height:2px;background:#e6f2b4"></div>
<div class="b " style="left:263px;top:766px;width:28px;height:2px;background:#e6f2b4"></div>
<div class="b " style="left:300px;top:766px;width:28px;height:2px;background:#e6f2b4"></div>
<div class="b " style="left:333px;top:766px;width:36px;height:2px;background:#e6f2b4"></div>
<svg class="b" style="left:1132px;top:749px;" width="12" height="7" viewBox="0 0 12 7"><path d="M.5 6.5L6 1L11.5 6.5" fill="none" stroke="#fff" stroke-width="1.2"/></svg>
<svg class="b" style="left:1154px;top:746px;" width="17" height="11" viewBox="0 0 17 11"><path d="M4 10.5C1.5 10.5 .3 9 .3 7.5C.3 6 1.5 5 3 5C3.3 2.8 5 1.5 6.8 1.5C8 1.5 9 2 9.7 3C10.3 2.6 11 2.5 11.6 2.5C13.5 2.5 14.8 4 14.8 5.6C16 5.8 16.7 6.8 16.7 8C16.7 9.5 15.6 10.5 14 10.5Z" fill="#fff"/></svg>
<svg class="b" style="left:1177px;top:746px;" width="17" height="12" viewBox="0 0 17 12"><rect x="5" y="3.5" width="10.5" height="7" fill="none" stroke="#fff" stroke-width="1.2"/><rect x="16" y="5.5" width="1" height="3" fill="#fff"/><rect x="6.5" y="5" width="5" height="4" fill="#fff"/><path d="M1.5 0V2.5M4.5 0V2.5" stroke="#fff" stroke-width="1"/><path d="M.5 2.5H5.5V5C5.5 6.5 4.5 7.5 3 7.5C1.5 7.5 .5 6.5 .5 5Z" fill="none" stroke="#fff" stroke-width="1"/><path d="M3 7.5V10C3 11 4 11.5 5 11" fill="none" stroke="#fff" stroke-width="1"/></svg>
<svg class="b" style="left:1204px;top:747px;" width="14" height="13" viewBox="0 0 14 13"><g fill="none" stroke="#e8e8e8" stroke-width="1.2"><path d="M1 12A11 11 0 0 1 12.5 1"/><path d="M4 12A8 8 0 0 1 12.5 4"/><path d="M7.5 12A4.5 4.5 0 0 1 12.5 7.5"/></g><circle cx="11.5" cy="11" r="1.5" fill="#fff"/></svg>
<svg class="b" style="left:1226px;top:746px;" width="15" height="14" viewBox="0 0 15 14"><path d="M.5 4.5H3L6.5 1V13L3 9.5H.5Z" fill="none" stroke="#fff" stroke-width="1.1"/><path d="M9.5 4.5L14 9.5M14 4.5L9.5 9.5" stroke="#fff" stroke-width="1.1"/></svg>
<div class="t" style="left:1251px;top:746px;font-size:13px;color:#fff;width:13.0px;text-align:center;">中</div>
<div class="t" style="left:1275.5px;top:747px;font-size:12px;color:#fff;">18:38</div>
<svg class="b" style="left:1325px;top:745px;" width="17" height="16" viewBox="0 0 17 16"><path d="M.7 .7H16.3V11.3H10.5L8.5 14.5L6.5 11.3H.7Z" fill="none" stroke="#fff" stroke-width="1.3"/></svg>
<div class="b " style="left:1361px;top:738px;width:1px;height:30px;background:#5a5a5a"></div>
<div class="t" style="left:4px;top:339px;font-size:12px;color:#e8e8e8;width:6px;overflow:hidden">2</div>
<div class="t" style="left:4px;top:503px;font-size:12px;color:#e8e8e8;width:6px;overflow:hidden">A</div>
<div class="t" style="left:4px;top:592px;font-size:12px;color:#e8e8e8;width:6px;overflow:hidden">K</div>
<div class="t" style="left:4px;top:608px;font-size:12px;color:#e8e8e8;width:6px;overflow:hidden">S</div>
<div class="t" style="left:4px;top:699px;font-size:12px;color:#e8e8e8;width:6px;overflow:hidden">A</div>
</body>
</html>
